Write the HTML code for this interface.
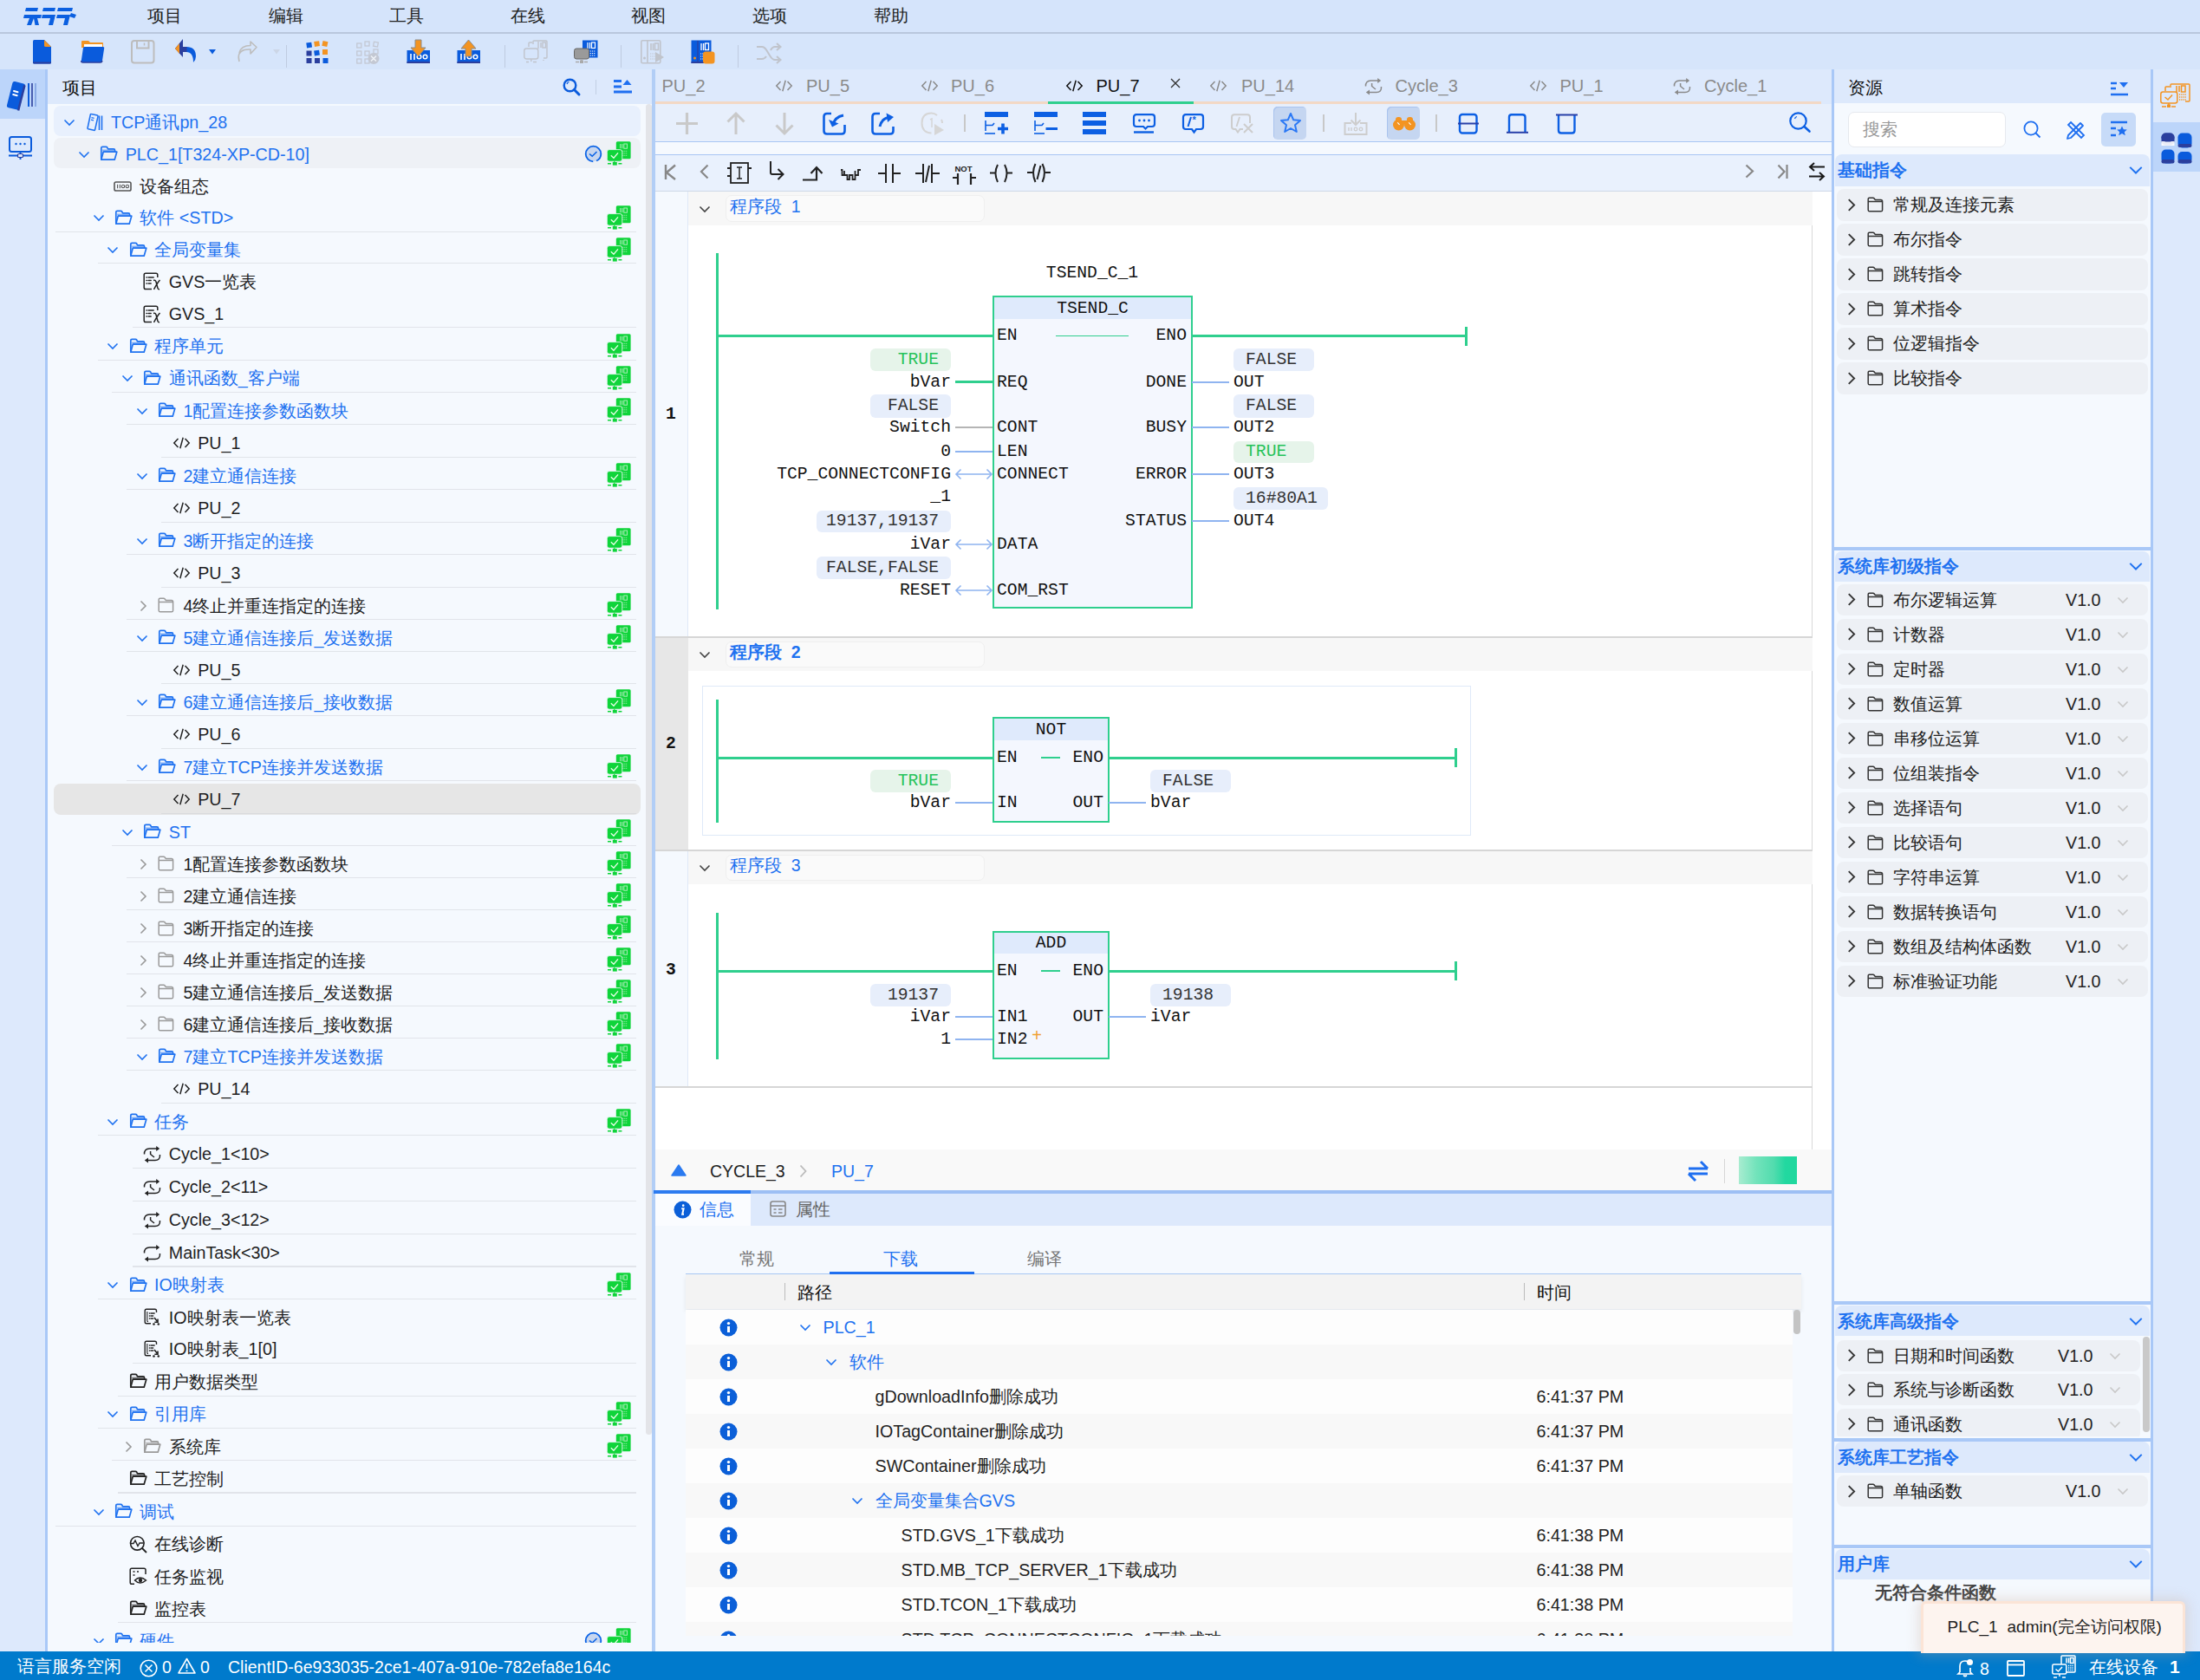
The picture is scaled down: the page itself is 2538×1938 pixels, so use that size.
<!DOCTYPE html><html><head><meta charset="utf-8"><style>
*{box-sizing:border-box;margin:0;padding:0}
html,body{width:2538px;height:1938px;overflow:hidden;background:#f5f9fe;font-family:"Liberation Sans",sans-serif;}
div{position:absolute}
.t{white-space:nowrap;font-size:19.7px;color:#222}
.m{white-space:nowrap;font-family:"Liberation Mono",monospace;font-size:19.7px;color:#111}
svg{overflow:visible}
</style></head><body><div style="left:0px;top:0px;width:2538px;height:39px;background:#d5e4fb;border-bottom:2px solid #b9c7dd"></div>
<div style="left:0px;top:39px;width:2538px;height:41px;background:#d6e5fb"></div>
<div class="t" style="left:169.7px;top:3.0px;line-height:30px;font-size:19.5px;color:#222">项目</div>
<div class="t" style="left:309.6px;top:3.0px;line-height:30px;font-size:19.5px;color:#222">编辑</div>
<div class="t" style="left:449px;top:3.0px;line-height:30px;font-size:19.5px;color:#222">工具</div>
<div class="t" style="left:588.5px;top:3.0px;line-height:30px;font-size:19.5px;color:#222">在线</div>
<div class="t" style="left:728.4px;top:3.0px;line-height:30px;font-size:19.5px;color:#222">视图</div>
<div class="t" style="left:868px;top:3.0px;line-height:30px;font-size:19.5px;color:#222">选项</div>
<div class="t" style="left:1008.3px;top:3.0px;line-height:30px;font-size:19.5px;color:#222">帮助</div>
<div style="left:0px;top:80px;width:52px;height:1825px;background:#dde9fc"></div>
<div style="left:0px;top:80px;width:52px;height:57px;background:#bcd5fa"></div>
<div style="left:52px;top:80px;width:3px;height:1825px;background:#a9c8f7"></div>
<div style="left:55px;top:80px;width:697px;height:40px;background:#dde9fc"></div>
<div class="t" style="left:72px;top:86.0px;line-height:30px;font-size:19.7px;color:#111">项目</div>
<div style="left:55px;top:120px;width:697px;height:1785px;background:#f5f9fe"></div>
<div style="left:745px;top:120px;width:7px;height:1535px;background:#e3e4e8;border-radius:4px"></div>
<div style="left:752px;top:80px;width:4px;height:1825px;background:#b2cef6"></div>
<div style="left:756px;top:80px;width:1357px;height:37px;background:#dde9fc"></div>
<div style="left:756px;top:117px;width:1345px;height:3px;background:#f2d8c5"></div>
<div style="left:1209px;top:117px;width:168px;height:3px;background:#2fcf8e"></div>
<div style="left:2101px;top:117px;width:12px;height:3px;background:#dde9fc"></div>
<div style="left:756px;top:120px;width:1357px;height:44px;background:#e7effc;border-bottom:1px solid #a8c5f3"></div>
<div style="left:756px;top:164px;width:1357px;height:15px;background:#f5f9fe;border-bottom:1px solid #a8c5f3"></div>
<div style="left:756px;top:179px;width:1357px;height:42px;background:#e9f1fd;border-bottom:1px solid #cfd9e8"></div>
<div style="left:756px;top:221px;width:1357px;height:1105px;background:#ffffff"></div>
<div style="left:2113px;top:80px;width:3px;height:1825px;background:#a9c8f7"></div>
<div style="left:2116px;top:80px;width:365px;height:1825px;background:#f5f9fe"></div>
<div style="left:2481px;top:80px;width:3px;height:1825px;background:#a9c8f7"></div>
<div style="left:2484px;top:80px;width:54px;height:1825px;background:#dde9fc"></div>
<div style="left:2484px;top:141px;width:54px;height:57px;background:#bcd5fa"></div>
<div style="left:0px;top:1905px;width:2538px;height:33px;background:#007acc"></div>
<div style="left:55px;top:120px;width:690px;height:1775px;overflow:hidden"><div style="left:7px;top:2px;width:677px;height:35px;background:#e8f0fd;border-radius:8px"></div><svg style="position:absolute;left:18.299999999999997px;top:16.5px;color:#1f72f0;" width="14" height="9"><use href="#chev-d"/></svg><svg style="position:absolute;left:44.5px;top:10.0px;color:#1f72f0;" width="19" height="22"><use href="#proj"/></svg><div class="t" style="left:73.0px;top:5.5px;line-height:30px;color:#1f72f0">TCP通讯pn_28</div><div style="left:7px;top:39px;width:677px;height:34.5px;background:#eef1f6;border-radius:8px"></div><svg style="position:absolute;left:35.0px;top:53.900000000000006px;color:#1f72f0;" width="14" height="9"><use href="#chev-d"/></svg><svg style="position:absolute;left:60.2px;top:48.400000000000006px;color:#1f72f0;" width="21" height="18"><use href="#fold-open"/></svg><div class="t" style="left:89.69999999999999px;top:42.900000000000006px;line-height:30px;color:#1f72f0">PLC_1[T324-XP-CD-10]</div><svg style="position:absolute;left:644.8px;top:43.300000000000004px;color:#222;" width="28" height="28"><use href="#greenplc"/></svg><svg style="position:absolute;left:619px;top:47.400000000000006px;color:#222;" width="21" height="21"><use href="#checkc"/></svg><svg style="position:absolute;left:76.4px;top:89px;color:#555;" width="21" height="12"><use href="#device"/></svg><div class="t" style="left:106.4px;top:80.0px;line-height:30px;color:#1e1e1e">设备组态</div><div style="left:9px;top:147.00000000000003px;width:670px;height:1.2px;background:#e1e4ea"></div><svg style="position:absolute;left:51.69999999999999px;top:127.19999999999999px;color:#1f72f0;" width="14" height="9"><use href="#chev-d"/></svg><svg style="position:absolute;left:76.9px;top:121.69999999999999px;color:#1f72f0;" width="21" height="18"><use href="#fold-open"/></svg><div class="t" style="left:106.4px;top:116.19999999999999px;line-height:30px;color:#1f72f0">软件 &lt;STD&gt;</div><svg style="position:absolute;left:644.8px;top:116.6px;color:#222;" width="28" height="28"><use href="#greenplc"/></svg><div style="left:58px;top:182.70000000000002px;width:621px;height:1.2px;background:#e1e4ea"></div><svg style="position:absolute;left:68.39999999999999px;top:164.25000000000006px;color:#1f72f0;" width="14" height="9"><use href="#chev-d"/></svg><svg style="position:absolute;left:93.6px;top:158.75000000000006px;color:#1f72f0;" width="21" height="18"><use href="#fold-open"/></svg><div class="t" style="left:123.1px;top:153.25000000000006px;line-height:30px;color:#1f72f0">全局变量集</div><svg style="position:absolute;left:644.8px;top:153.65000000000006px;color:#222;" width="28" height="28"><use href="#greenplc"/></svg><svg style="position:absolute;left:110.30000000000001px;top:194.25000000000006px;color:#222;" width="21" height="21"><use href="#table"/></svg><div class="t" style="left:139.8px;top:189.75000000000006px;line-height:30px;color:#1e1e1e">GVS一览表</div><div style="left:98px;top:257.29999999999995px;width:581px;height:1.2px;background:#e1e4ea"></div><svg style="position:absolute;left:110.30000000000001px;top:231.55px;color:#222;" width="21" height="21"><use href="#table"/></svg><div class="t" style="left:139.8px;top:227.05px;line-height:30px;color:#1e1e1e">GVS_1</div><div style="left:58px;top:294.59999999999997px;width:621px;height:1.2px;background:#e1e4ea"></div><svg style="position:absolute;left:68.39999999999999px;top:275.34999999999997px;color:#1f72f0;" width="14" height="9"><use href="#chev-d"/></svg><svg style="position:absolute;left:93.6px;top:269.84999999999997px;color:#1f72f0;" width="21" height="18"><use href="#fold-open"/></svg><div class="t" style="left:123.1px;top:264.34999999999997px;line-height:30px;color:#1f72f0">程序单元</div><svg style="position:absolute;left:644.8px;top:264.74999999999994px;color:#222;" width="28" height="28"><use href="#greenplc"/></svg><div style="left:74px;top:331.5px;width:605px;height:1.2px;background:#e1e4ea"></div><svg style="position:absolute;left:85.1px;top:312.45px;color:#1f72f0;" width="14" height="9"><use href="#chev-d"/></svg><svg style="position:absolute;left:110.30000000000001px;top:306.95px;color:#1f72f0;" width="21" height="18"><use href="#fold-open"/></svg><div class="t" style="left:139.8px;top:301.45px;line-height:30px;color:#1f72f0">通讯函数_客户端</div><svg style="position:absolute;left:644.8px;top:301.84999999999997px;color:#222;" width="28" height="28"><use href="#greenplc"/></svg><div style="left:91px;top:368.9px;width:588px;height:1.2px;background:#e1e4ea"></div><svg style="position:absolute;left:101.80000000000001px;top:349.6px;color:#1f72f0;" width="14" height="9"><use href="#chev-d"/></svg><svg style="position:absolute;left:127.0px;top:344.1px;color:#1f72f0;" width="21" height="18"><use href="#fold-open"/></svg><div class="t" style="left:156.5px;top:338.6px;line-height:30px;color:#1f72f0">1配置连接参数函数块</div><svg style="position:absolute;left:644.8px;top:339.0px;color:#222;" width="28" height="28"><use href="#greenplc"/></svg><div style="left:131px;top:407.0px;width:548px;height:1.2px;background:#e1e4ea"></div><svg style="position:absolute;left:143.7px;top:383.35px;color:#222;" width="21" height="16"><use href="#code"/></svg><div class="t" style="left:173.2px;top:376.35px;line-height:30px;color:#1e1e1e">PU_1</div><div style="left:91px;top:443.9px;width:588px;height:1.2px;background:#e1e4ea"></div><svg style="position:absolute;left:101.80000000000001px;top:424.8499999999999px;color:#1f72f0;" width="14" height="9"><use href="#chev-d"/></svg><svg style="position:absolute;left:127.0px;top:419.3499999999999px;color:#1f72f0;" width="21" height="18"><use href="#fold-open"/></svg><div class="t" style="left:156.5px;top:413.8499999999999px;line-height:30px;color:#1f72f0">2建立通信连接</div><svg style="position:absolute;left:644.8px;top:414.2499999999999px;color:#222;" width="28" height="28"><use href="#greenplc"/></svg><div style="left:131px;top:482.0px;width:548px;height:1.2px;background:#e1e4ea"></div><svg style="position:absolute;left:143.7px;top:458.3499999999999px;color:#222;" width="21" height="16"><use href="#code"/></svg><div class="t" style="left:173.2px;top:451.3499999999999px;line-height:30px;color:#1e1e1e">PU_2</div><div style="left:91px;top:518.9px;width:588px;height:1.2px;background:#e1e4ea"></div><svg style="position:absolute;left:101.80000000000001px;top:499.8499999999999px;color:#1f72f0;" width="14" height="9"><use href="#chev-d"/></svg><svg style="position:absolute;left:127.0px;top:494.3499999999999px;color:#1f72f0;" width="21" height="18"><use href="#fold-open"/></svg><div class="t" style="left:156.5px;top:488.8499999999999px;line-height:30px;color:#1f72f0">3断开指定的连接</div><svg style="position:absolute;left:644.8px;top:489.2499999999999px;color:#222;" width="28" height="28"><use href="#greenplc"/></svg><div style="left:131px;top:557.0px;width:548px;height:1.2px;background:#e1e4ea"></div><svg style="position:absolute;left:143.7px;top:533.3499999999999px;color:#222;" width="21" height="16"><use href="#code"/></svg><div class="t" style="left:173.2px;top:526.3499999999999px;line-height:30px;color:#1e1e1e">PU_3</div><div style="left:91px;top:593.9px;width:588px;height:1.2px;background:#e1e4ea"></div><svg style="position:absolute;left:105.80000000000001px;top:571.8499999999999px;color:#999;" width="9" height="14"><use href="#chev-r"/></svg><svg style="position:absolute;left:127.0px;top:569.3499999999999px;color:#9a9a9a;" width="19" height="18"><use href="#fold"/></svg><div class="t" style="left:156.5px;top:563.8499999999999px;line-height:30px;color:#1e1e1e">4终止并重连指定的连接</div><svg style="position:absolute;left:644.8px;top:564.2499999999999px;color:#222;" width="28" height="28"><use href="#greenplc"/></svg><div style="left:91px;top:630.8px;width:588px;height:1.2px;background:#e1e4ea"></div><svg style="position:absolute;left:101.80000000000001px;top:611.75px;color:#1f72f0;" width="14" height="9"><use href="#chev-d"/></svg><svg style="position:absolute;left:127.0px;top:606.25px;color:#1f72f0;" width="21" height="18"><use href="#fold-open"/></svg><div class="t" style="left:156.5px;top:600.75px;line-height:30px;color:#1f72f0">5建立通信连接后_发送数据</div><svg style="position:absolute;left:644.8px;top:601.15px;color:#222;" width="28" height="28"><use href="#greenplc"/></svg><div style="left:131px;top:668.1999999999999px;width:548px;height:1.2px;background:#e1e4ea"></div><svg style="position:absolute;left:143.7px;top:644.8999999999999px;color:#222;" width="21" height="16"><use href="#code"/></svg><div class="t" style="left:173.2px;top:637.8999999999999px;line-height:30px;color:#1e1e1e">PU_5</div><div style="left:91px;top:704.6px;width:588px;height:1.2px;background:#e1e4ea"></div><svg style="position:absolute;left:101.80000000000001px;top:685.8px;color:#1f72f0;" width="14" height="9"><use href="#chev-d"/></svg><svg style="position:absolute;left:127.0px;top:680.3px;color:#1f72f0;" width="21" height="18"><use href="#fold-open"/></svg><div class="t" style="left:156.5px;top:674.8px;line-height:30px;color:#1f72f0">6建立通信连接后_接收数据</div><svg style="position:absolute;left:644.8px;top:675.1999999999999px;color:#222;" width="28" height="28"><use href="#greenplc"/></svg><div style="left:131px;top:743.1px;width:548px;height:1.2px;background:#e1e4ea"></div><svg style="position:absolute;left:143.7px;top:719.25px;color:#222;" width="21" height="16"><use href="#code"/></svg><div class="t" style="left:173.2px;top:712.25px;line-height:30px;color:#1e1e1e">PU_6</div><div style="left:91px;top:779.9px;width:588px;height:1.2px;background:#e1e4ea"></div><svg style="position:absolute;left:101.80000000000001px;top:760.9px;color:#1f72f0;" width="14" height="9"><use href="#chev-d"/></svg><svg style="position:absolute;left:127.0px;top:755.4px;color:#1f72f0;" width="21" height="18"><use href="#fold-open"/></svg><div class="t" style="left:156.5px;top:749.9px;line-height:30px;color:#1f72f0">7建立TCP连接并发送数据</div><svg style="position:absolute;left:644.8px;top:750.3px;color:#222;" width="28" height="28"><use href="#greenplc"/></svg><div style="left:7px;top:784px;width:677px;height:36px;background:#e6e6e6;border-radius:8px"></div><div style="left:131px;top:817.5px;width:548px;height:1.2px;background:#d9dadd"></div><svg style="position:absolute;left:143.7px;top:794.0999999999999px;color:#222;" width="21" height="16"><use href="#code"/></svg><div class="t" style="left:173.2px;top:787.0999999999999px;line-height:30px;color:#1e1e1e">PU_7</div><div style="left:74px;top:854.9px;width:605px;height:1.2px;background:#e1e4ea"></div><svg style="position:absolute;left:85.1px;top:835.5999999999999px;color:#1f72f0;" width="14" height="9"><use href="#chev-d"/></svg><svg style="position:absolute;left:110.30000000000001px;top:830.0999999999999px;color:#1f72f0;" width="21" height="18"><use href="#fold-open"/></svg><div class="t" style="left:139.8px;top:824.5999999999999px;line-height:30px;color:#1f72f0">ST</div><svg style="position:absolute;left:644.8px;top:824.9999999999999px;color:#222;" width="28" height="28"><use href="#greenplc"/></svg><div style="left:91px;top:891.8px;width:588px;height:1.2px;background:#e1e4ea"></div><svg style="position:absolute;left:105.80000000000001px;top:869.75px;color:#999;" width="9" height="14"><use href="#chev-r"/></svg><svg style="position:absolute;left:127.0px;top:867.25px;color:#9a9a9a;" width="19" height="18"><use href="#fold"/></svg><div class="t" style="left:156.5px;top:861.75px;line-height:30px;color:#1e1e1e">1配置连接参数函数块</div><svg style="position:absolute;left:644.8px;top:862.15px;color:#222;" width="28" height="28"><use href="#greenplc"/></svg><div style="left:91px;top:929.1999999999999px;width:588px;height:1.2px;background:#e1e4ea"></div><svg style="position:absolute;left:105.80000000000001px;top:906.8999999999999px;color:#999;" width="9" height="14"><use href="#chev-r"/></svg><svg style="position:absolute;left:127.0px;top:904.3999999999999px;color:#9a9a9a;" width="19" height="18"><use href="#fold"/></svg><div class="t" style="left:156.5px;top:898.8999999999999px;line-height:30px;color:#1e1e1e">2建立通信连接</div><svg style="position:absolute;left:644.8px;top:899.2999999999998px;color:#222;" width="28" height="28"><use href="#greenplc"/></svg><div style="left:91px;top:966.1px;width:588px;height:1.2px;background:#e1e4ea"></div><svg style="position:absolute;left:105.80000000000001px;top:944.05px;color:#999;" width="9" height="14"><use href="#chev-r"/></svg><svg style="position:absolute;left:127.0px;top:941.55px;color:#9a9a9a;" width="19" height="18"><use href="#fold"/></svg><div class="t" style="left:156.5px;top:936.05px;line-height:30px;color:#1e1e1e">3断开指定的连接</div><svg style="position:absolute;left:644.8px;top:936.4499999999999px;color:#222;" width="28" height="28"><use href="#greenplc"/></svg><div style="left:91px;top:1002.9999999999999px;width:588px;height:1.2px;background:#e1e4ea"></div><svg style="position:absolute;left:105.80000000000001px;top:980.95px;color:#999;" width="9" height="14"><use href="#chev-r"/></svg><svg style="position:absolute;left:127.0px;top:978.45px;color:#9a9a9a;" width="19" height="18"><use href="#fold"/></svg><div class="t" style="left:156.5px;top:972.95px;line-height:30px;color:#1e1e1e">4终止并重连指定的连接</div><svg style="position:absolute;left:644.8px;top:973.35px;color:#222;" width="28" height="28"><use href="#greenplc"/></svg><div style="left:91px;top:1040.1000000000001px;width:588px;height:1.2px;background:#e1e4ea"></div><svg style="position:absolute;left:105.80000000000001px;top:1017.95px;color:#999;" width="9" height="14"><use href="#chev-r"/></svg><svg style="position:absolute;left:127.0px;top:1015.45px;color:#9a9a9a;" width="19" height="18"><use href="#fold"/></svg><div class="t" style="left:156.5px;top:1009.95px;line-height:30px;color:#1e1e1e">5建立通信连接后_发送数据</div><svg style="position:absolute;left:644.8px;top:1010.35px;color:#222;" width="28" height="28"><use href="#greenplc"/></svg><div style="left:91px;top:1077.0px;width:588px;height:1.2px;background:#e1e4ea"></div><svg style="position:absolute;left:105.80000000000001px;top:1054.95px;color:#999;" width="9" height="14"><use href="#chev-r"/></svg><svg style="position:absolute;left:127.0px;top:1052.45px;color:#9a9a9a;" width="19" height="18"><use href="#fold"/></svg><div class="t" style="left:156.5px;top:1046.95px;line-height:30px;color:#1e1e1e">6建立通信连接后_接收数据</div><svg style="position:absolute;left:644.8px;top:1047.3500000000001px;color:#222;" width="28" height="28"><use href="#greenplc"/></svg><div style="left:91px;top:1113.8000000000002px;width:588px;height:1.2px;background:#e1e4ea"></div><svg style="position:absolute;left:101.80000000000001px;top:1094.8px;color:#1f72f0;" width="14" height="9"><use href="#chev-d"/></svg><svg style="position:absolute;left:127.0px;top:1089.3px;color:#1f72f0;" width="21" height="18"><use href="#fold-open"/></svg><div class="t" style="left:156.5px;top:1083.8px;line-height:30px;color:#1f72f0">7建立TCP连接并发送数据</div><svg style="position:absolute;left:644.8px;top:1084.2px;color:#222;" width="28" height="28"><use href="#greenplc"/></svg><div style="left:131px;top:1151.8000000000002px;width:548px;height:1.2px;background:#e1e4ea"></div><svg style="position:absolute;left:143.7px;top:1128.2px;color:#222;" width="21" height="16"><use href="#code"/></svg><div class="t" style="left:173.2px;top:1121.2px;line-height:30px;color:#1e1e1e">PU_14</div><div style="left:58px;top:1188.7px;width:621px;height:1.2px;background:#e1e4ea"></div><svg style="position:absolute;left:68.39999999999999px;top:1169.6499999999999px;color:#1f72f0;" width="14" height="9"><use href="#chev-d"/></svg><svg style="position:absolute;left:93.6px;top:1164.1499999999999px;color:#1f72f0;" width="21" height="18"><use href="#fold-open"/></svg><div class="t" style="left:123.1px;top:1158.6499999999999px;line-height:30px;color:#1f72f0">任务</div><svg style="position:absolute;left:644.8px;top:1159.05px;color:#222;" width="28" height="28"><use href="#greenplc"/></svg><div style="left:98px;top:1226.8000000000002px;width:581px;height:1.2px;background:#e1e4ea"></div><svg style="position:absolute;left:110.30000000000001px;top:1200.6499999999999px;color:#222;" width="21" height="21"><use href="#cycle"/></svg><div class="t" style="left:139.8px;top:1196.1499999999999px;line-height:30px;color:#1e1e1e">Cycle_1&lt;10&gt;</div><div style="left:98px;top:1264.9px;width:581px;height:1.2px;background:#e1e4ea"></div><svg style="position:absolute;left:110.30000000000001px;top:1238.75px;color:#222;" width="21" height="21"><use href="#cycle"/></svg><div class="t" style="left:139.8px;top:1234.25px;line-height:30px;color:#1e1e1e">Cycle_2&lt;11&gt;</div><div style="left:98px;top:1303.0px;width:581px;height:1.2px;background:#e1e4ea"></div><svg style="position:absolute;left:110.30000000000001px;top:1276.85px;color:#222;" width="21" height="21"><use href="#cycle"/></svg><div class="t" style="left:139.8px;top:1272.35px;line-height:30px;color:#1e1e1e">Cycle_3&lt;12&gt;</div><div style="left:98px;top:1340.4px;width:581px;height:1.2px;background:#e1e4ea"></div><svg style="position:absolute;left:110.30000000000001px;top:1314.6px;color:#222;" width="21" height="21"><use href="#maintask"/></svg><div class="t" style="left:139.8px;top:1310.1px;line-height:30px;color:#1e1e1e">MainTask&lt;30&gt;</div><div style="left:58px;top:1377.7px;width:621px;height:1.2px;background:#e1e4ea"></div><svg style="position:absolute;left:68.39999999999999px;top:1358.45px;color:#1f72f0;" width="14" height="9"><use href="#chev-d"/></svg><svg style="position:absolute;left:93.6px;top:1352.95px;color:#1f72f0;" width="21" height="18"><use href="#fold-open"/></svg><div class="t" style="left:123.1px;top:1347.45px;line-height:30px;color:#1f72f0">IO映射表</div><svg style="position:absolute;left:644.8px;top:1347.8500000000001px;color:#222;" width="28" height="28"><use href="#greenplc"/></svg><svg style="position:absolute;left:110.30000000000001px;top:1389.05px;color:#222;" width="21" height="21"><use href="#iotable"/></svg><div class="t" style="left:139.8px;top:1384.55px;line-height:30px;color:#1e1e1e">IO映射表一览表</div><div style="left:98px;top:1451.5px;width:581px;height:1.2px;background:#e1e4ea"></div><svg style="position:absolute;left:110.30000000000001px;top:1425.9499999999998px;color:#222;" width="21" height="21"><use href="#iotable"/></svg><div class="t" style="left:139.8px;top:1421.4499999999998px;line-height:30px;color:#1e1e1e">IO映射表_1[0]</div><div style="left:81px;top:1489.5px;width:598px;height:1.2px;background:#e1e4ea"></div><svg style="position:absolute;left:93.6px;top:1464.3999999999999px;color:#222;" width="21" height="18"><use href="#fold-open"/></svg><div class="t" style="left:123.1px;top:1458.8999999999999px;line-height:30px;color:#1e1e1e">用户数据类型</div><div style="left:58px;top:1526.5px;width:621px;height:1.2px;background:#e1e4ea"></div><svg style="position:absolute;left:68.39999999999999px;top:1507.3999999999999px;color:#1f72f0;" width="14" height="9"><use href="#chev-d"/></svg><svg style="position:absolute;left:93.6px;top:1501.8999999999999px;color:#1f72f0;" width="21" height="18"><use href="#fold-open"/></svg><div class="t" style="left:123.1px;top:1496.3999999999999px;line-height:30px;color:#1f72f0">引用库</div><svg style="position:absolute;left:644.8px;top:1496.8px;color:#222;" width="28" height="28"><use href="#greenplc"/></svg><div style="left:74px;top:1563.7px;width:605px;height:1.2px;background:#e1e4ea"></div><svg style="position:absolute;left:89.1px;top:1541.4999999999998px;color:#999;" width="9" height="14"><use href="#chev-r"/></svg><svg style="position:absolute;left:110.30000000000001px;top:1538.9999999999998px;color:#9a9a9a;" width="21" height="18"><use href="#fold-open"/></svg><div class="t" style="left:139.8px;top:1533.4999999999998px;line-height:30px;color:#1e1e1e">系统库</div><svg style="position:absolute;left:644.8px;top:1533.8999999999999px;color:#222;" width="28" height="28"><use href="#greenplc"/></svg><div style="left:81px;top:1601.4px;width:598px;height:1.2px;background:#e1e4ea"></div><svg style="position:absolute;left:93.6px;top:1576.45px;color:#222;" width="21" height="18"><use href="#fold-open"/></svg><div class="t" style="left:123.1px;top:1570.95px;line-height:30px;color:#1e1e1e">工艺控制</div><div style="left:9px;top:1639.5px;width:670px;height:1.2px;background:#e1e4ea"></div><svg style="position:absolute;left:51.69999999999999px;top:1619.85px;color:#1f72f0;" width="14" height="9"><use href="#chev-d"/></svg><svg style="position:absolute;left:76.9px;top:1614.35px;color:#1f72f0;" width="21" height="18"><use href="#fold-open"/></svg><div class="t" style="left:106.4px;top:1608.85px;line-height:30px;color:#1f72f0">调试</div><svg style="position:absolute;left:93.6px;top:1650.9333333333332px;color:#222;" width="21" height="21"><use href="#diag"/></svg><div class="t" style="left:123.1px;top:1646.4333333333332px;line-height:30px;color:#1e1e1e">在线诊断</div><svg style="position:absolute;left:93.6px;top:1687.9999999999998px;color:#222;" width="21" height="21"><use href="#monitor"/></svg><div class="t" style="left:123.1px;top:1683.4999999999998px;line-height:30px;color:#1e1e1e">任务监视</div><div style="left:81px;top:1750.7px;width:598px;height:1.2px;background:#e1e4ea"></div><svg style="position:absolute;left:93.6px;top:1726.0666666666666px;color:#222;" width="21" height="18"><use href="#fold-open"/></svg><div class="t" style="left:123.1px;top:1720.5666666666666px;line-height:30px;color:#1e1e1e">监控表</div><svg style="position:absolute;left:51.69999999999999px;top:1768.7px;color:#1f72f0;" width="14" height="9"><use href="#chev-d"/></svg><svg style="position:absolute;left:76.9px;top:1763.2px;color:#1f72f0;" width="21" height="18"><use href="#fold-open"/></svg><div class="t" style="left:106.4px;top:1757.7px;line-height:30px;color:#1f72f0">硬件</div><svg style="position:absolute;left:644.8px;top:1758.1000000000001px;color:#222;" width="28" height="28"><use href="#greenplc"/></svg><svg style="position:absolute;left:619px;top:1762.2px;color:#222;" width="21" height="21"><use href="#checkc"/></svg></div>
<div style="left:756px;top:221px;width:38px;height:1033px;background:#f5f9fe;border-right:1.5px solid #dfe9f7"></div>
<div style="left:756px;top:735px;width:38px;height:246px;background:#e7e7e7"></div>
<div style="left:2090px;top:221px;width:1px;height:1105px;background:#d9d9d9"></div>
<div style="left:794px;top:221px;width:1297px;height:39px;background:#f7f7f7"></div><div style="left:837px;top:225px;width:299px;height:31px;background:#fafafa;border:1px solid #efefef;border-radius:7px"></div><svg style="position:absolute;left:806px;top:236.5px;color:#444;" width="14" height="9"><use href="#chev-d"/></svg><div class="t" style="left:842px;top:222.5px;line-height:30px;color:#1f72f0;font-size:19.5px;">程序段&nbsp;&nbsp;1</div>
<div style="left:756px;top:733.5px;width:1335px;height:2px;background:#d6d6d6"></div>
<div style="left:794px;top:735.5px;width:1297px;height:38.5px;background:#f7f7f7"></div><div style="left:837px;top:739.5px;width:299px;height:30.5px;background:#fafafa;border:1px solid #efefef;border-radius:7px"></div><svg style="position:absolute;left:806px;top:750.75px;color:#444;" width="14" height="9"><use href="#chev-d"/></svg><div class="t" style="left:842px;top:736.75px;line-height:30px;color:#1f72f0;font-size:19.5px;font-weight:bold;">程序段&nbsp;&nbsp;2</div>
<div style="left:756px;top:979.5px;width:1335px;height:2px;background:#d6d6d6"></div>
<div style="left:794px;top:981.5px;width:1297px;height:38.5px;background:#f7f7f7"></div><div style="left:837px;top:985.5px;width:299px;height:30.5px;background:#fafafa;border:1px solid #efefef;border-radius:7px"></div><svg style="position:absolute;left:806px;top:996.75px;color:#444;" width="14" height="9"><use href="#chev-d"/></svg><div class="t" style="left:842px;top:982.75px;line-height:30px;color:#1f72f0;font-size:19.5px;">程序段&nbsp;&nbsp;3</div>
<div style="left:756px;top:1253px;width:1335px;height:2px;background:#d6d6d6"></div>
<div class="m" style="left:768px;top:465.0px;line-height:26px;font-weight:bold;color:#111">1</div>
<div class="m" style="left:768px;top:845.0px;line-height:26px;font-weight:bold;color:#111">2</div>
<div class="m" style="left:768px;top:1106.0px;line-height:26px;font-weight:bold;color:#111">3</div>
<div style="left:826.0px;top:292px;width:3px;height:411px;background:#2fcf8e"></div>
<div style="left:827px;top:386.0px;width:319px;height:3px;background:#2fcf8e"></div>
<div class="m" style="left:1110.0px;top:302.0px;width:300px;line-height:26px;text-align:center;color:#111">TSEND_C_1</div>
<div style="left:1145px;top:341px;width:231px;height:361px;background:#f4f7fe;border:2px solid #2fcf8e"></div><div style="left:1147px;top:343px;width:227px;height:25px;background:#dfeafc"></div><div class="m" style="left:1145.0px;top:342.5px;width:231px;line-height:26px;text-align:center;color:#111">TSEND_C</div>
<div style="left:1218px;top:386.75px;width:84px;height:1.5px;background:#2fcf8e"></div>
<div style="left:1375px;top:386.0px;width:316px;height:3px;background:#2fcf8e"></div>
<div style="left:1689.5px;top:376.5px;width:3px;height:22px;background:#2fcf8e"></div>
<div class="m" style="left:1150px;top:374.0px;line-height:26px;color:#111;">EN</div>
<div class="m" style="left:1150px;top:427.5px;line-height:26px;color:#111;">REQ</div>
<div class="m" style="left:1150px;top:480.0px;line-height:26px;color:#111;">CONT</div>
<div class="m" style="left:1150px;top:507.5px;line-height:26px;color:#111;">LEN</div>
<div class="m" style="left:1150px;top:534.0px;line-height:26px;color:#111;">CONNECT</div>
<div class="m" style="left:1150px;top:614.5px;line-height:26px;color:#111;">DATA</div>
<div class="m" style="left:1150px;top:668.0px;line-height:26px;color:#111;">COM_RST</div>
<div class="m" style="right:1169px;top:374.0px;line-height:26px;text-align:right;color:#111;">ENO</div>
<div class="m" style="right:1169px;top:427.5px;line-height:26px;text-align:right;color:#111;">DONE</div>
<div class="m" style="right:1169px;top:480.0px;line-height:26px;text-align:right;color:#111;">BUSY</div>
<div class="m" style="right:1169px;top:534.0px;line-height:26px;text-align:right;color:#111;">ERROR</div>
<div class="m" style="right:1169px;top:588.0px;line-height:26px;text-align:right;color:#111;">STATUS</div>
<div style="left:1004px;top:401.5px;width:93px;height:26.5px;background:#e6f4ea;border-radius:6px"></div><div class="m" style="right:1455px;top:401.75px;line-height:26px;text-align:right;color:#27c35a">TRUE</div>
<div class="m" style="right:1441px;top:427.5px;line-height:26px;text-align:right;color:#111;">bVar</div>
<div style="left:1102px;top:439.0px;width:43px;height:3px;background:#2fcf8e"></div>
<div style="left:1004px;top:455px;width:93px;height:26.5px;background:#e7eefb;border-radius:6px"></div><div class="m" style="right:1455px;top:455.25px;line-height:26px;text-align:right;color:#333">FALSE</div>
<div class="m" style="right:1441px;top:480.0px;line-height:26px;text-align:right;color:#111;">Switch</div>
<div style="left:1102px;top:492.0px;width:43px;height:2px;background:#b5b5b5"></div>
<div class="m" style="right:1441px;top:507.5px;line-height:26px;text-align:right;color:#111;">0</div>
<div style="left:1102px;top:519.5px;width:43px;height:2px;background:#8fb4f0"></div>
<div class="m" style="right:1441px;top:534.0px;line-height:26px;text-align:right;color:#111;">TCP_CONNECTCONFIG</div>
<div class="m" style="right:1441px;top:560.0px;line-height:26px;text-align:right;color:#111;">_1</div>
<svg style="position:absolute;left:1102px;top:540px;" width="43" height="14" viewBox="0 0 43 14"><path d="M1 7 H42 M6.5 1.5 L1 7 L6.5 12.5 M36.5 1.5 L42 7 L36.5 12.5" fill="none" stroke="#8fb4f0" stroke-width="1.6"/></svg>
<div style="left:942px;top:588.5px;width:155px;height:25.5px;background:#e7eefb;border-radius:6px"></div><div class="m" style="right:1455px;top:588.25px;line-height:26px;text-align:right;color:#333">19137,19137</div>
<div class="m" style="right:1441px;top:614.5px;line-height:26px;text-align:right;color:#111;">iVar</div>
<svg style="position:absolute;left:1102px;top:620.5px;" width="43" height="14" viewBox="0 0 43 14"><path d="M1 7 H42 M6.5 1.5 L1 7 L6.5 12.5 M36.5 1.5 L42 7 L36.5 12.5" fill="none" stroke="#8fb4f0" stroke-width="1.6"/></svg>
<div style="left:942px;top:641.5px;width:155px;height:26.0px;background:#e7eefb;border-radius:6px"></div><div class="m" style="right:1455px;top:641.5px;line-height:26px;text-align:right;color:#333">FALSE,FALSE</div>
<div class="m" style="right:1441px;top:668.0px;line-height:26px;text-align:right;color:#111;">RESET</div>
<svg style="position:absolute;left:1102px;top:674px;" width="43" height="14" viewBox="0 0 43 14"><path d="M1 7 H42 M6.5 1.5 L1 7 L6.5 12.5 M36.5 1.5 L42 7 L36.5 12.5" fill="none" stroke="#8fb4f0" stroke-width="1.6"/></svg>
<div style="left:1423px;top:401.5px;width:93px;height:26.5px;background:#e7eefb;border-radius:6px"></div>
<div class="m" style="left:1437px;top:401.75px;line-height:26px;color:#333;">FALSE</div>
<div style="left:1423px;top:455px;width:93px;height:26.5px;background:#e7eefb;border-radius:6px"></div>
<div class="m" style="left:1437px;top:455.25px;line-height:26px;color:#333;">FALSE</div>
<div style="left:1423px;top:508.5px;width:93px;height:25.5px;background:#e6f4ea;border-radius:6px"></div>
<div class="m" style="left:1437px;top:508.25px;line-height:26px;color:#27c35a;">TRUE</div>
<div style="left:1423px;top:562px;width:109px;height:25.5px;background:#e7eefb;border-radius:6px"></div>
<div class="m" style="left:1437px;top:561.75px;line-height:26px;color:#333;">16#80A1</div>
<div class="m" style="left:1423px;top:427.5px;line-height:26px;color:#111;">OUT</div>
<div style="left:1375px;top:439.5px;width:43px;height:2px;background:#8fb4f0"></div>
<div class="m" style="left:1423px;top:480.0px;line-height:26px;color:#111;">OUT2</div>
<div style="left:1375px;top:492.0px;width:43px;height:2px;background:#8fb4f0"></div>
<div class="m" style="left:1423px;top:534.0px;line-height:26px;color:#111;">OUT3</div>
<div style="left:1375px;top:546.0px;width:43px;height:2px;background:#8fb4f0"></div>
<div class="m" style="left:1423px;top:588.0px;line-height:26px;color:#111;">OUT4</div>
<div style="left:1375px;top:600.0px;width:43px;height:2px;background:#8fb4f0"></div>
<div style="left:810px;top:791px;width:887px;height:173px;border:1.5px solid #dfe9f8"></div>
<div style="left:826.0px;top:807px;width:3px;height:142px;background:#2fcf8e"></div>
<div style="left:827px;top:872.5px;width:319px;height:3px;background:#2fcf8e"></div>
<div style="left:1145px;top:827px;width:135px;height:122px;background:#f4f7fe;border:2px solid #2fcf8e"></div><div style="left:1147px;top:829px;width:131px;height:25px;background:#dfeafc"></div><div class="m" style="left:1145.0px;top:828.5px;width:135px;line-height:26px;text-align:center;color:#111">NOT</div>
<div style="left:1201px;top:873.25px;width:22px;height:1.5px;background:#2fcf8e"></div>
<div style="left:1278px;top:872.5px;width:401px;height:3px;background:#2fcf8e"></div>
<div style="left:1677.5px;top:863px;width:3px;height:22px;background:#2fcf8e"></div>
<div class="m" style="left:1150px;top:861.0px;line-height:26px;color:#111;">EN</div>
<div class="m" style="right:1265px;top:861.0px;line-height:26px;text-align:right;color:#111;">ENO</div>
<div class="m" style="left:1150px;top:913.0px;line-height:26px;color:#111;">IN</div>
<div class="m" style="right:1265px;top:913.0px;line-height:26px;text-align:right;color:#111;">OUT</div>
<div style="left:1004px;top:888px;width:93px;height:26px;background:#e6f4ea;border-radius:6px"></div><div class="m" style="right:1455px;top:888.0px;line-height:26px;text-align:right;color:#27c35a">TRUE</div>
<div class="m" style="right:1441px;top:913.0px;line-height:26px;text-align:right;color:#111;">bVar</div>
<div style="left:1102px;top:925.0px;width:43px;height:2px;background:#8fb4f0"></div>
<div style="left:1327px;top:888px;width:93px;height:26px;background:#e7eefb;border-radius:6px"></div>
<div class="m" style="left:1341px;top:888.0px;line-height:26px;color:#333;">FALSE</div>
<div class="m" style="left:1327px;top:913.0px;line-height:26px;color:#111;">bVar</div>
<div style="left:1279px;top:925.0px;width:43px;height:2px;background:#8fb4f0"></div>
<div style="left:826.0px;top:1053px;width:3px;height:169px;background:#2fcf8e"></div>
<div style="left:827px;top:1118.5px;width:319px;height:3px;background:#2fcf8e"></div>
<div style="left:1145px;top:1074px;width:135px;height:148px;background:#f4f7fe;border:2px solid #2fcf8e"></div><div style="left:1147px;top:1076px;width:131px;height:24px;background:#dfeafc"></div><div class="m" style="left:1145.0px;top:1075.0px;width:135px;line-height:26px;text-align:center;color:#111">ADD</div>
<div style="left:1201px;top:1119.25px;width:22px;height:1.5px;background:#2fcf8e"></div>
<div style="left:1278px;top:1118.5px;width:401px;height:3px;background:#2fcf8e"></div>
<div style="left:1677.5px;top:1109px;width:3px;height:22px;background:#2fcf8e"></div>
<div class="m" style="left:1150px;top:1107.0px;line-height:26px;color:#111;">EN</div>
<div class="m" style="right:1265px;top:1107.0px;line-height:26px;text-align:right;color:#111;">ENO</div>
<div class="m" style="left:1150px;top:1160.0px;line-height:26px;color:#111;">IN1</div>
<div class="m" style="right:1265px;top:1160.0px;line-height:26px;text-align:right;color:#111;">OUT</div>
<div class="m" style="left:1150px;top:1186.0px;line-height:26px;color:#111;">IN2</div>
<div class="t" style="left:1186.0px;top:1184.0px;width:20px;line-height:20px;text-align:center;color:#f0a030;font-size:20px">+</div>
<div style="left:1004px;top:1134.5px;width:93px;height:26px;background:#e7eefb;border-radius:6px"></div>
<div class="m" style="right:1455px;top:1134.5px;line-height:26px;text-align:right;color:#333;">19137</div>
<div class="m" style="right:1441px;top:1160.0px;line-height:26px;text-align:right;color:#111;">iVar</div>
<div style="left:1102px;top:1172.0px;width:43px;height:2px;background:#8fb4f0"></div>
<div class="m" style="right:1441px;top:1186.0px;line-height:26px;text-align:right;color:#111;">1</div>
<div style="left:1102px;top:1198.0px;width:43px;height:2px;background:#8fb4f0"></div>
<div style="left:1327px;top:1134.5px;width:93px;height:26px;background:#e7eefb;border-radius:6px"></div>
<div class="m" style="left:1341px;top:1134.5px;line-height:26px;color:#333;">19138</div>
<div class="m" style="left:1327px;top:1160.0px;line-height:26px;color:#111;">iVar</div>
<div style="left:1279px;top:1172.0px;width:43px;height:2px;background:#8fb4f0"></div>
<div style="left:756px;top:1326px;width:1357px;height:47px;background:#f9f9f9"></div>
<svg style="position:absolute;left:774px;top:1343px;" width="18" height="14" viewBox="0 0 18 14"><path d="M9 1 L17 13 H1 Z" fill="#2a7af0" stroke="#2a7af0" stroke-width="1.5" stroke-linejoin="round"/></svg>
<div class="t" style="left:819px;top:1336.0px;line-height:30px;color:#222;font-size:19.5px">CYCLE_3</div>
<svg style="position:absolute;left:922px;top:1343px;" width="9" height="16" viewBox="0 0 9 16"><path d="M1.5 1.5 L7.5 8 L1.5 14.5" fill="none" stroke="#bbb" stroke-width="1.8"/></svg>
<div class="t" style="left:959px;top:1336.0px;line-height:30px;color:#1f72f0;font-size:19.5px">PU_7</div>
<svg style="position:absolute;left:1946px;top:1338px;" width="26" height="26" viewBox="0 0 26 26"><path d="M2 10 H24 M16 2 L24 10 M24 16 H2 M10 24 L2 16" fill="none" stroke="#1f6ff0" stroke-width="3"/></svg>
<div style="left:1989px;top:1337px;width:1px;height:28px;background:#d6d6d6"></div>
<div style="left:2005.5px;top:1334px;width:67px;height:32px;background:linear-gradient(90deg,#a8ecd0 0%,#72e3bb 30%,#52dcae 60%,#22d8a0 80%,#20d89e 100%)"></div>
<div style="left:754px;top:1373px;width:1359px;height:3.5px;background:#9dbff4"></div>
<div style="left:754px;top:1373px;width:112px;height:3.5px;background:#2d7bf0"></div>
<div style="left:756px;top:1376.5px;width:1357px;height:37.5px;background:#dde9fc"></div>
<div style="left:756px;top:1376.5px;width:110px;height:37.5px;background:#fafcff"></div>
<svg style="position:absolute;left:777px;top:1385px;" width="21" height="21" viewBox="0 0 21 21"><circle cx="10.5" cy="10.5" r="10" fill="#0b5fd8"/><path d="M11.2 5.6 v.1" stroke="#fff" stroke-width="2.6" stroke-linecap="round"/><path d="M9.2 9.2 H11.6 L10.2 15.8 H12" fill="none" stroke="#fff" stroke-width="2"/></svg>
<div class="t" style="left:807px;top:1380.0px;line-height:30px;color:#1f72f0">信息</div>
<svg style="position:absolute;left:888px;top:1385px;" width="19" height="19" viewBox="0 0 19 19"><rect x="1" y="1" width="17" height="17" rx="2.5" fill="none" stroke="#888" stroke-width="1.6"/><path d="M1 6 H18 M4.5 10 h3 M4.5 14 h3 M10 10 h4.5 M10 14 h4.5" stroke="#888" stroke-width="1.5"/></svg>
<div class="t" style="left:918px;top:1380.0px;line-height:30px;color:#666">属性</div>
<div style="left:756px;top:1414px;width:1357px;height:491px;background:#f5f9fe"></div>
<div class="t" style="left:852.5px;top:1437.0px;line-height:30px;color:#777">常规</div>
<div class="t" style="left:1018.5px;top:1437.0px;line-height:30px;color:#1f72f0">下载</div>
<div class="t" style="left:1184.5px;top:1437.0px;line-height:30px;color:#777">编译</div>
<div style="left:791px;top:1469px;width:1287px;height:1px;background:#a8c8f5"></div>
<div style="left:957px;top:1466.5px;width:167px;height:3.5px;background:#1f6ff0"></div>
<div style="left:791px;top:1470px;width:1287px;height:40px;background:#f3f3f3;box-shadow:0 3px 5px rgba(0,0,0,.08)"></div>
<div style="left:905px;top:1480px;width:1px;height:20px;background:#bbb"></div>
<div class="t" style="left:920px;top:1476.0px;line-height:30px;color:#111">路径</div>
<div style="left:1757.5px;top:1480px;width:1px;height:20px;background:#bbb"></div>
<div class="t" style="left:1772.5px;top:1476.0px;line-height:30px;color:#111">时间</div>
<div style="left:791px;top:1510px;width:1287px;height:377px;overflow:hidden"><div style="left:0px;top:1px;width:1277px;height:40px;background:#fdfdfd"></div><svg style="position:absolute;left:38.5px;top:10.5px;" width="21" height="21" viewBox="0 0 21 21"><circle cx="10.5" cy="10.5" r="10" fill="#0b5fd8"/><circle cx="10.5" cy="5.6" r="1.7" fill="#fff"/><path d="M10.5 9 V16" stroke="#fff" stroke-width="3"/></svg><svg style="position:absolute;left:130.5px;top:17px;color:#1f72f0;" width="14" height="9"><use href="#chev-d"/></svg><div class="t" style="left:158.5px;top:6.0px;line-height:30px;color:#1f72f0">PLC_1</div><div style="left:0px;top:41px;width:1277px;height:40px;background:#f8f8f8"></div><svg style="position:absolute;left:38.5px;top:50.5px;" width="21" height="21" viewBox="0 0 21 21"><circle cx="10.5" cy="10.5" r="10" fill="#0b5fd8"/><circle cx="10.5" cy="5.6" r="1.7" fill="#fff"/><path d="M10.5 9 V16" stroke="#fff" stroke-width="3"/></svg><svg style="position:absolute;left:160.5px;top:57px;color:#1f72f0;" width="14" height="9"><use href="#chev-d"/></svg><div class="t" style="left:188.5px;top:46.0px;line-height:30px;color:#1f72f0">软件</div><div style="left:0px;top:81px;width:1277px;height:40px;background:#fdfdfd"></div><svg style="position:absolute;left:38.5px;top:90.5px;" width="21" height="21" viewBox="0 0 21 21"><circle cx="10.5" cy="10.5" r="10" fill="#0b5fd8"/><circle cx="10.5" cy="5.6" r="1.7" fill="#fff"/><path d="M10.5 9 V16" stroke="#fff" stroke-width="3"/></svg><div class="t" style="left:218.5px;top:86.0px;line-height:30px;color:#222">gDownloadInfo删除成功</div><div class="t" style="left:981.5px;top:86.0px;line-height:30px;color:#222">6:41:37 PM</div><div style="left:0px;top:121px;width:1277px;height:40px;background:#f8f8f8"></div><svg style="position:absolute;left:38.5px;top:130.5px;" width="21" height="21" viewBox="0 0 21 21"><circle cx="10.5" cy="10.5" r="10" fill="#0b5fd8"/><circle cx="10.5" cy="5.6" r="1.7" fill="#fff"/><path d="M10.5 9 V16" stroke="#fff" stroke-width="3"/></svg><div class="t" style="left:218.5px;top:126.0px;line-height:30px;color:#222">IOTagContainer删除成功</div><div class="t" style="left:981.5px;top:126.0px;line-height:30px;color:#222">6:41:37 PM</div><div style="left:0px;top:161px;width:1277px;height:40px;background:#fdfdfd"></div><svg style="position:absolute;left:38.5px;top:170.5px;" width="21" height="21" viewBox="0 0 21 21"><circle cx="10.5" cy="10.5" r="10" fill="#0b5fd8"/><circle cx="10.5" cy="5.6" r="1.7" fill="#fff"/><path d="M10.5 9 V16" stroke="#fff" stroke-width="3"/></svg><div class="t" style="left:218.5px;top:166.0px;line-height:30px;color:#222">SWContainer删除成功</div><div class="t" style="left:981.5px;top:166.0px;line-height:30px;color:#222">6:41:37 PM</div><div style="left:0px;top:201px;width:1277px;height:40px;background:#f8f8f8"></div><svg style="position:absolute;left:38.5px;top:210.5px;" width="21" height="21" viewBox="0 0 21 21"><circle cx="10.5" cy="10.5" r="10" fill="#0b5fd8"/><circle cx="10.5" cy="5.6" r="1.7" fill="#fff"/><path d="M10.5 9 V16" stroke="#fff" stroke-width="3"/></svg><svg style="position:absolute;left:190.5px;top:217px;color:#1f72f0;" width="14" height="9"><use href="#chev-d"/></svg><div class="t" style="left:218.5px;top:206.0px;line-height:30px;color:#1f72f0">全局变量集合GVS</div><div style="left:0px;top:241px;width:1277px;height:40px;background:#fdfdfd"></div><svg style="position:absolute;left:38.5px;top:250.5px;" width="21" height="21" viewBox="0 0 21 21"><circle cx="10.5" cy="10.5" r="10" fill="#0b5fd8"/><circle cx="10.5" cy="5.6" r="1.7" fill="#fff"/><path d="M10.5 9 V16" stroke="#fff" stroke-width="3"/></svg><div class="t" style="left:248.5px;top:246.0px;line-height:30px;color:#222">STD.GVS_1下载成功</div><div class="t" style="left:981.5px;top:246.0px;line-height:30px;color:#222">6:41:38 PM</div><div style="left:0px;top:281px;width:1277px;height:40px;background:#f8f8f8"></div><svg style="position:absolute;left:38.5px;top:290.5px;" width="21" height="21" viewBox="0 0 21 21"><circle cx="10.5" cy="10.5" r="10" fill="#0b5fd8"/><circle cx="10.5" cy="5.6" r="1.7" fill="#fff"/><path d="M10.5 9 V16" stroke="#fff" stroke-width="3"/></svg><div class="t" style="left:248.5px;top:286.0px;line-height:30px;color:#222">STD.MB_TCP_SERVER_1下载成功</div><div class="t" style="left:981.5px;top:286.0px;line-height:30px;color:#222">6:41:38 PM</div><div style="left:0px;top:321px;width:1277px;height:40px;background:#fdfdfd"></div><svg style="position:absolute;left:38.5px;top:330.5px;" width="21" height="21" viewBox="0 0 21 21"><circle cx="10.5" cy="10.5" r="10" fill="#0b5fd8"/><circle cx="10.5" cy="5.6" r="1.7" fill="#fff"/><path d="M10.5 9 V16" stroke="#fff" stroke-width="3"/></svg><div class="t" style="left:248.5px;top:326.0px;line-height:30px;color:#222">STD.TCON_1下载成功</div><div class="t" style="left:981.5px;top:326.0px;line-height:30px;color:#222">6:41:38 PM</div><div style="left:0px;top:361px;width:1277px;height:40px;background:#f8f8f8"></div><svg style="position:absolute;left:38.5px;top:370.5px;" width="21" height="21" viewBox="0 0 21 21"><circle cx="10.5" cy="10.5" r="10" fill="#0b5fd8"/><circle cx="10.5" cy="5.6" r="1.7" fill="#fff"/><path d="M10.5 9 V16" stroke="#fff" stroke-width="3"/></svg><div class="t" style="left:248.5px;top:366.0px;line-height:30px;color:#222">STD.TCP_CONNECTCONFIG_1下载成功</div><div class="t" style="left:981.5px;top:366.0px;line-height:30px;color:#222">6:41:38 PM</div></div>
<div style="left:2069px;top:1511px;width:8px;height:28px;background:#c4c4c4;border-radius:4px"></div>
<div style="left:2116px;top:80px;width:365px;height:39px;background:#dde9fc"></div>
<div class="t" style="left:2132px;top:86.0px;line-height:30px;color:#111">资源</div>
<svg style="position:absolute;left:2434px;top:94px;" width="22" height="17" viewBox="0 0 22 17"><path d="M1 2 H8 M1 8 H7 M1 15 H21" stroke="#1f6ff0" stroke-width="2.6"/><path d="M11 1 H21 L16 7 Z" fill="#1f6ff0"/></svg>
<div style="left:2131.5px;top:129px;width:182px;height:40.5px;background:#fff;border:1px solid #e6e9ee;border-radius:7px"></div>
<div class="t" style="left:2149px;top:134.0px;line-height:30px;color:#999">搜索</div>
<svg style="position:absolute;left:2334px;top:139px;" width="21" height="21" viewBox="0 0 21 21"><circle cx="9" cy="9" r="7.6" fill="none" stroke="#1f6ff0" stroke-width="1.8"/><path d="M14.5 14.5 L19.5 19.5" stroke="#1f6ff0" stroke-width="1.8"/></svg>
<svg style="position:absolute;left:2383px;top:138px;" width="24" height="24" viewBox="0 0 24 24"><path d="M3 18 L17 4 L20 7 L6 21 L2 22 Z" fill="none" stroke="#1f6ff0" stroke-width="1.8" stroke-linejoin="round"/><path d="M6 3 L21 18 L18 21 L3 6 Z" fill="none" stroke="#1f6ff0" stroke-width="1.8"/></svg>
<div style="left:2424px;top:130px;width:40px;height:38.5px;background:#c7dbf8;border-radius:5px"></div>
<svg style="position:absolute;left:2434px;top:139px;" width="21" height="20" viewBox="0 0 21 20"><path d="M1 2 H20 M1 9 H7 M1 17 H7" stroke="#1f6ff0" stroke-width="2.4"/><path d="M14 6.5 L15.8 10.3 L19.8 10.6 L16.8 13.2 L17.8 17.2 L14 15 L10.2 17.2 L11.2 13.2 L8.2 10.6 L12.2 10.3 Z" fill="#1f6ff0"/></svg>
<div style="left:2117px;top:178px;width:363px;height:36.5px;background:#dde9fc;border-radius:8px 8px 0 0"></div><div class="t" style="left:2120px;top:181.25px;line-height:30px;color:#1f72f0;font-weight:bold;font-size:19.7px">基础指令</div><svg style="position:absolute;left:2455px;top:191.25px;color:#1f72f0;" width="18" height="11"><use href="#chev-d"/></svg>
<div style="left:2118.5px;top:218px;width:359.5px;height:36.5px;background:#edf0f5;border-radius:8px"></div><svg style="position:absolute;left:2131px;top:227.75px;color:#333;" width="10.5" height="17"><use href="#chev-r"/></svg><svg style="position:absolute;left:2154px;top:227.25px;color:#333;" width="19" height="18"><use href="#fold"/></svg><div class="t" style="left:2184px;top:221.25px;line-height:30px;color:#222">常规及连接元素</div>
<div style="left:2118.5px;top:258px;width:359.5px;height:36.5px;background:#edf0f5;border-radius:8px"></div><svg style="position:absolute;left:2131px;top:267.75px;color:#333;" width="10.5" height="17"><use href="#chev-r"/></svg><svg style="position:absolute;left:2154px;top:267.25px;color:#333;" width="19" height="18"><use href="#fold"/></svg><div class="t" style="left:2184px;top:261.25px;line-height:30px;color:#222">布尔指令</div>
<div style="left:2118.5px;top:298px;width:359.5px;height:36.5px;background:#edf0f5;border-radius:8px"></div><svg style="position:absolute;left:2131px;top:307.75px;color:#333;" width="10.5" height="17"><use href="#chev-r"/></svg><svg style="position:absolute;left:2154px;top:307.25px;color:#333;" width="19" height="18"><use href="#fold"/></svg><div class="t" style="left:2184px;top:301.25px;line-height:30px;color:#222">跳转指令</div>
<div style="left:2118.5px;top:338px;width:359.5px;height:36.5px;background:#edf0f5;border-radius:8px"></div><svg style="position:absolute;left:2131px;top:347.75px;color:#333;" width="10.5" height="17"><use href="#chev-r"/></svg><svg style="position:absolute;left:2154px;top:347.25px;color:#333;" width="19" height="18"><use href="#fold"/></svg><div class="t" style="left:2184px;top:341.25px;line-height:30px;color:#222">算术指令</div>
<div style="left:2118.5px;top:378px;width:359.5px;height:36.5px;background:#edf0f5;border-radius:8px"></div><svg style="position:absolute;left:2131px;top:387.75px;color:#333;" width="10.5" height="17"><use href="#chev-r"/></svg><svg style="position:absolute;left:2154px;top:387.25px;color:#333;" width="19" height="18"><use href="#fold"/></svg><div class="t" style="left:2184px;top:381.25px;line-height:30px;color:#222">位逻辑指令</div>
<div style="left:2118.5px;top:418px;width:359.5px;height:36.5px;background:#edf0f5;border-radius:8px"></div><svg style="position:absolute;left:2131px;top:427.75px;color:#333;" width="10.5" height="17"><use href="#chev-r"/></svg><svg style="position:absolute;left:2154px;top:427.25px;color:#333;" width="19" height="18"><use href="#fold"/></svg><div class="t" style="left:2184px;top:421.25px;line-height:30px;color:#222">比较指令</div>
<div style="left:2116px;top:630.5px;width:365px;height:4px;background:#a9c8f7"></div>
<div style="left:2117px;top:635.5px;width:363px;height:35.5px;background:#dde9fc;border-radius:8px 8px 0 0"></div><div class="t" style="left:2120px;top:638.25px;line-height:30px;color:#1f72f0;font-weight:bold;font-size:19.7px">系统库初级指令</div><svg style="position:absolute;left:2455px;top:648.25px;color:#1f72f0;" width="18" height="11"><use href="#chev-d"/></svg>
<div style="left:2118.5px;top:673.5px;width:359.5px;height:36.5px;background:#edf0f5;border-radius:8px"></div><svg style="position:absolute;left:2131px;top:683.25px;color:#333;" width="10.5" height="17"><use href="#chev-r"/></svg><svg style="position:absolute;left:2154px;top:682.75px;color:#333;" width="19" height="18"><use href="#fold"/></svg><div class="t" style="left:2184px;top:676.75px;line-height:30px;color:#222">布尔逻辑运算</div><div class="t" style="left:2383px;top:676.75px;line-height:30px;color:#222">V1.0</div><svg style="position:absolute;left:2442px;top:687.75px;color:#c8c8c8;" width="14" height="9"><use href="#chev-d"/></svg>
<div style="left:2118.5px;top:713.5px;width:359.5px;height:36.5px;background:#edf0f5;border-radius:8px"></div><svg style="position:absolute;left:2131px;top:723.25px;color:#333;" width="10.5" height="17"><use href="#chev-r"/></svg><svg style="position:absolute;left:2154px;top:722.75px;color:#333;" width="19" height="18"><use href="#fold"/></svg><div class="t" style="left:2184px;top:716.75px;line-height:30px;color:#222">计数器</div><div class="t" style="left:2383px;top:716.75px;line-height:30px;color:#222">V1.0</div><svg style="position:absolute;left:2442px;top:727.75px;color:#c8c8c8;" width="14" height="9"><use href="#chev-d"/></svg>
<div style="left:2118.5px;top:753.5px;width:359.5px;height:36.5px;background:#edf0f5;border-radius:8px"></div><svg style="position:absolute;left:2131px;top:763.25px;color:#333;" width="10.5" height="17"><use href="#chev-r"/></svg><svg style="position:absolute;left:2154px;top:762.75px;color:#333;" width="19" height="18"><use href="#fold"/></svg><div class="t" style="left:2184px;top:756.75px;line-height:30px;color:#222">定时器</div><div class="t" style="left:2383px;top:756.75px;line-height:30px;color:#222">V1.0</div><svg style="position:absolute;left:2442px;top:767.75px;color:#c8c8c8;" width="14" height="9"><use href="#chev-d"/></svg>
<div style="left:2118.5px;top:793.5px;width:359.5px;height:36.5px;background:#edf0f5;border-radius:8px"></div><svg style="position:absolute;left:2131px;top:803.25px;color:#333;" width="10.5" height="17"><use href="#chev-r"/></svg><svg style="position:absolute;left:2154px;top:802.75px;color:#333;" width="19" height="18"><use href="#fold"/></svg><div class="t" style="left:2184px;top:796.75px;line-height:30px;color:#222">数值运算</div><div class="t" style="left:2383px;top:796.75px;line-height:30px;color:#222">V1.0</div><svg style="position:absolute;left:2442px;top:807.75px;color:#c8c8c8;" width="14" height="9"><use href="#chev-d"/></svg>
<div style="left:2118.5px;top:833.5px;width:359.5px;height:36.5px;background:#edf0f5;border-radius:8px"></div><svg style="position:absolute;left:2131px;top:843.25px;color:#333;" width="10.5" height="17"><use href="#chev-r"/></svg><svg style="position:absolute;left:2154px;top:842.75px;color:#333;" width="19" height="18"><use href="#fold"/></svg><div class="t" style="left:2184px;top:836.75px;line-height:30px;color:#222">串移位运算</div><div class="t" style="left:2383px;top:836.75px;line-height:30px;color:#222">V1.0</div><svg style="position:absolute;left:2442px;top:847.75px;color:#c8c8c8;" width="14" height="9"><use href="#chev-d"/></svg>
<div style="left:2118.5px;top:873.5px;width:359.5px;height:36.5px;background:#edf0f5;border-radius:8px"></div><svg style="position:absolute;left:2131px;top:883.25px;color:#333;" width="10.5" height="17"><use href="#chev-r"/></svg><svg style="position:absolute;left:2154px;top:882.75px;color:#333;" width="19" height="18"><use href="#fold"/></svg><div class="t" style="left:2184px;top:876.75px;line-height:30px;color:#222">位组装指令</div><div class="t" style="left:2383px;top:876.75px;line-height:30px;color:#222">V1.0</div><svg style="position:absolute;left:2442px;top:887.75px;color:#c8c8c8;" width="14" height="9"><use href="#chev-d"/></svg>
<div style="left:2118.5px;top:913.5px;width:359.5px;height:36.5px;background:#edf0f5;border-radius:8px"></div><svg style="position:absolute;left:2131px;top:923.25px;color:#333;" width="10.5" height="17"><use href="#chev-r"/></svg><svg style="position:absolute;left:2154px;top:922.75px;color:#333;" width="19" height="18"><use href="#fold"/></svg><div class="t" style="left:2184px;top:916.75px;line-height:30px;color:#222">选择语句</div><div class="t" style="left:2383px;top:916.75px;line-height:30px;color:#222">V1.0</div><svg style="position:absolute;left:2442px;top:927.75px;color:#c8c8c8;" width="14" height="9"><use href="#chev-d"/></svg>
<div style="left:2118.5px;top:953.5px;width:359.5px;height:36.5px;background:#edf0f5;border-radius:8px"></div><svg style="position:absolute;left:2131px;top:963.25px;color:#333;" width="10.5" height="17"><use href="#chev-r"/></svg><svg style="position:absolute;left:2154px;top:962.75px;color:#333;" width="19" height="18"><use href="#fold"/></svg><div class="t" style="left:2184px;top:956.75px;line-height:30px;color:#222">比较语句</div><div class="t" style="left:2383px;top:956.75px;line-height:30px;color:#222">V1.0</div><svg style="position:absolute;left:2442px;top:967.75px;color:#c8c8c8;" width="14" height="9"><use href="#chev-d"/></svg>
<div style="left:2118.5px;top:993.5px;width:359.5px;height:36.5px;background:#edf0f5;border-radius:8px"></div><svg style="position:absolute;left:2131px;top:1003.25px;color:#333;" width="10.5" height="17"><use href="#chev-r"/></svg><svg style="position:absolute;left:2154px;top:1002.75px;color:#333;" width="19" height="18"><use href="#fold"/></svg><div class="t" style="left:2184px;top:996.75px;line-height:30px;color:#222">字符串运算</div><div class="t" style="left:2383px;top:996.75px;line-height:30px;color:#222">V1.0</div><svg style="position:absolute;left:2442px;top:1007.75px;color:#c8c8c8;" width="14" height="9"><use href="#chev-d"/></svg>
<div style="left:2118.5px;top:1033.5px;width:359.5px;height:36.5px;background:#edf0f5;border-radius:8px"></div><svg style="position:absolute;left:2131px;top:1043.25px;color:#333;" width="10.5" height="17"><use href="#chev-r"/></svg><svg style="position:absolute;left:2154px;top:1042.75px;color:#333;" width="19" height="18"><use href="#fold"/></svg><div class="t" style="left:2184px;top:1036.75px;line-height:30px;color:#222">数据转换语句</div><div class="t" style="left:2383px;top:1036.75px;line-height:30px;color:#222">V1.0</div><svg style="position:absolute;left:2442px;top:1047.75px;color:#c8c8c8;" width="14" height="9"><use href="#chev-d"/></svg>
<div style="left:2118.5px;top:1073.5px;width:359.5px;height:36.5px;background:#edf0f5;border-radius:8px"></div><svg style="position:absolute;left:2131px;top:1083.25px;color:#333;" width="10.5" height="17"><use href="#chev-r"/></svg><svg style="position:absolute;left:2154px;top:1082.75px;color:#333;" width="19" height="18"><use href="#fold"/></svg><div class="t" style="left:2184px;top:1076.75px;line-height:30px;color:#222">数组及结构体函数</div><div class="t" style="left:2383px;top:1076.75px;line-height:30px;color:#222">V1.0</div><svg style="position:absolute;left:2442px;top:1087.75px;color:#c8c8c8;" width="14" height="9"><use href="#chev-d"/></svg>
<div style="left:2118.5px;top:1113.5px;width:359.5px;height:36.5px;background:#edf0f5;border-radius:8px"></div><svg style="position:absolute;left:2131px;top:1123.25px;color:#333;" width="10.5" height="17"><use href="#chev-r"/></svg><svg style="position:absolute;left:2154px;top:1122.75px;color:#333;" width="19" height="18"><use href="#fold"/></svg><div class="t" style="left:2184px;top:1116.75px;line-height:30px;color:#222">标准验证功能</div><div class="t" style="left:2383px;top:1116.75px;line-height:30px;color:#222">V1.0</div><svg style="position:absolute;left:2442px;top:1127.75px;color:#c8c8c8;" width="14" height="9"><use href="#chev-d"/></svg>
<div style="left:2116px;top:1501px;width:365px;height:4px;background:#a9c8f7"></div>
<div style="left:2117px;top:1506px;width:363px;height:35px;background:#dde9fc;border-radius:8px 8px 0 0"></div><div class="t" style="left:2120px;top:1508.5px;line-height:30px;color:#1f72f0;font-weight:bold;font-size:19.7px">系统库高级指令</div><svg style="position:absolute;left:2455px;top:1518.5px;color:#1f72f0;" width="18" height="11"><use href="#chev-d"/></svg>
<div style="left:0;top:0;width:2538px;height:1656.5px;overflow:hidden"><div style="left:2118.5px;top:1545.5px;width:350.0px;height:36.0px;background:#edf0f5;border-radius:8px"></div><svg style="position:absolute;left:2131px;top:1555.0px;color:#333;" width="10.5" height="17"><use href="#chev-r"/></svg><svg style="position:absolute;left:2154px;top:1554.5px;color:#333;" width="19" height="18"><use href="#fold"/></svg><div class="t" style="left:2184px;top:1548.5px;line-height:30px;color:#222">日期和时间函数</div><div class="t" style="left:2374px;top:1548.5px;line-height:30px;color:#222">V1.0</div><svg style="position:absolute;left:2433px;top:1559.5px;color:#c8c8c8;" width="14" height="9"><use href="#chev-d"/></svg><div style="left:2118.5px;top:1585.2px;width:350.0px;height:36.0px;background:#edf0f5;border-radius:8px"></div><svg style="position:absolute;left:2131px;top:1594.7px;color:#333;" width="10.5" height="17"><use href="#chev-r"/></svg><svg style="position:absolute;left:2154px;top:1594.2px;color:#333;" width="19" height="18"><use href="#fold"/></svg><div class="t" style="left:2184px;top:1588.2px;line-height:30px;color:#222">系统与诊断函数</div><div class="t" style="left:2374px;top:1588.2px;line-height:30px;color:#222">V1.0</div><svg style="position:absolute;left:2433px;top:1599.2px;color:#c8c8c8;" width="14" height="9"><use href="#chev-d"/></svg><div style="left:2118.5px;top:1624.9px;width:350.0px;height:36.0px;background:#edf0f5;border-radius:8px"></div><svg style="position:absolute;left:2131px;top:1634.4px;color:#333;" width="10.5" height="17"><use href="#chev-r"/></svg><svg style="position:absolute;left:2154px;top:1633.9px;color:#333;" width="19" height="18"><use href="#fold"/></svg><div class="t" style="left:2184px;top:1627.9px;line-height:30px;color:#222">通讯函数</div><div class="t" style="left:2374px;top:1627.9px;line-height:30px;color:#222">V1.0</div><svg style="position:absolute;left:2433px;top:1638.9px;color:#c8c8c8;" width="14" height="9"><use href="#chev-d"/></svg></div>
<div style="left:2472px;top:1542px;width:8px;height:110px;background:#c9c9c9;border-radius:4px"></div>
<div style="left:2116px;top:1658.5px;width:365px;height:4px;background:#a9c8f7"></div>
<div style="left:2117px;top:1663px;width:363px;height:35.5px;background:#dde9fc;border-radius:8px 8px 0 0"></div><div class="t" style="left:2120px;top:1665.75px;line-height:30px;color:#1f72f0;font-weight:bold;font-size:19.7px">系统库工艺指令</div><svg style="position:absolute;left:2455px;top:1675.75px;color:#1f72f0;" width="18" height="11"><use href="#chev-d"/></svg>
<div style="left:2118.5px;top:1702px;width:359.5px;height:36px;background:#edf0f5;border-radius:8px"></div><svg style="position:absolute;left:2131px;top:1711.5px;color:#333;" width="10.5" height="17"><use href="#chev-r"/></svg><svg style="position:absolute;left:2154px;top:1711.0px;color:#333;" width="19" height="18"><use href="#fold"/></svg><div class="t" style="left:2184px;top:1705.0px;line-height:30px;color:#222">单轴函数</div><div class="t" style="left:2383px;top:1705.0px;line-height:30px;color:#222">V1.0</div><svg style="position:absolute;left:2442px;top:1716.0px;color:#c8c8c8;" width="14" height="9"><use href="#chev-d"/></svg>
<div style="left:2116px;top:1781.5px;width:365px;height:4px;background:#a9c8f7"></div>
<div style="left:2117px;top:1786.5px;width:363px;height:35.0px;background:#dde9fc;border-radius:8px 8px 0 0"></div><div class="t" style="left:2120px;top:1789.0px;line-height:30px;color:#1f72f0;font-weight:bold;font-size:19.7px">用户库</div><svg style="position:absolute;left:2455px;top:1799.0px;color:#1f72f0;" width="18" height="11"><use href="#chev-d"/></svg>
<div class="t" style="left:2163px;top:1822.0px;line-height:30px;color:#444;font-weight:bold">无符合条件函数</div>
<div style="left:2216px;top:1847px;width:305px;height:60px;background:#fdf4ef;border:3px solid #fbe4d6;border-bottom:none;border-radius:6px 6px 0 0;box-shadow:0 0 14px 3px rgba(200,170,150,.30)"></div>
<div class="t" style="left:2246.5px;top:1862.0px;line-height:30px;color:#222;font-size:19px">PLC_1</div>
<div class="t" style="left:2315.5px;top:1862.0px;line-height:30px;color:#222;font-size:19px">admin(完全访问权限)</div>
<svg width="0" height="0" style="position:absolute"><defs><symbol id="chev-d" viewBox="0 0 14 9"><path d="M1.5 1.5 L7 7 L12.5 1.5" fill="none" stroke="currentColor" stroke-width="1.6"/></symbol><symbol id="chev-r" viewBox="0 0 9 14"><path d="M1.5 1.5 L7 7 L1.5 12.5" fill="none" stroke="currentColor" stroke-width="1.6"/></symbol><symbol id="fold-open" viewBox="0 0 21 18"><path d="M1.8 15.5 V2.8 Q1.8 1.3 3.3 1.3 H7.2 Q8.2 1.3 8.8 2.3 L9.6 3.8 H16 Q17.6 3.8 17.6 5.4 V7" fill="none" stroke="currentColor" stroke-width="1.7" stroke-linejoin="round"/><path d="M2.5 4.6 H16.8 V7 H4.2 Z" fill="currentColor" opacity=".55"/><path d="M1.8 16.2 L4.2 7.2 H19.8 L17.2 16.2 Z" fill="none" stroke="currentColor" stroke-width="1.7" stroke-linejoin="round"/></symbol><symbol id="fold" viewBox="0 0 19 18"><path d="M1.2 15.2 V2.6 Q1.2 1.2 2.6 1.2 H6.8 Q7.6 1.2 8.2 2 L9.2 3.4 H15.8 Q17.6 3.4 17.6 5.2 V15.2 Q17.6 16.8 16 16.8 H2.8 Q1.2 16.8 1.2 15.2 Z M1.2 5.6 H17.6" fill="none" stroke="currentColor" stroke-width="1.5" stroke-linejoin="round"/></symbol><symbol id="device" viewBox="0 0 21 12"><rect x="1" y="1" width="19" height="10" rx="1.8" fill="none" stroke="currentColor" stroke-width="1.6"/><path d="M4.6 3.8 V8.2 M7.4 3.8 V8.2" stroke="currentColor" stroke-width="1.1"/><circle cx="11" cy="6" r="1.7" fill="none" stroke="currentColor" stroke-width="1.1"/><circle cx="15.8" cy="6" r="1.7" fill="none" stroke="currentColor" stroke-width="1.1"/></symbol><symbol id="table" viewBox="0 0 21 21"><path d="M16.8 6 V3 Q16.8 1.2 15 1.2 H3 Q1.2 1.2 1.2 3 V17.8 Q1.2 19.6 3 19.6 H10" fill="none" stroke="currentColor" stroke-width="1.5"/><path d="M4 6 h.6 M6.2 6 h6 M4 9.5 h.6 M6.2 9.5 h3 M4 13 h.6 M6.2 13 h3" stroke="currentColor" stroke-width="1.4" stroke-linecap="round"/><path d="M12 9.5 Q14 8.6 15 11 L17 18.5 Q17.6 20 19 19.6 M19.5 9 Q18 10.5 15.8 14 L12.5 19.8" fill="none" stroke="currentColor" stroke-width="1.5"/></symbol><symbol id="code" viewBox="0 0 21 16"><path d="M6.5 3 L1.8 8 L6.5 13 M12.2 1.8 L8.8 14.2 M14.5 3 L19.2 8 L14.5 13" fill="none" stroke="currentColor" stroke-width="1.5"/></symbol><symbol id="cycle" viewBox="0 0 21 21"><path d="M1.5 10.5 Q1.2 4.2 7.5 4 H16.5" fill="none" stroke="currentColor" stroke-width="1.5"/><path d="M15.2 1 L19.2 4 L15.2 7 Z" fill="currentColor"/><path d="M19.5 11 Q20 17.8 13.5 17.6 H5" fill="none" stroke="currentColor" stroke-width="1.5"/><path d="M6 14.6 L1.8 17.6 L6 20.4 Z" fill="currentColor"/><path d="M8.6 7 V10.5 L13 14" fill="none" stroke="currentColor" stroke-width="1.5"/></symbol><symbol id="maintask" viewBox="0 0 21 21"><path d="M1.5 10.5 Q1.2 4.2 7.5 4 H16.5" fill="none" stroke="currentColor" stroke-width="1.5"/><path d="M15.2 1 L19.2 4 L15.2 7 Z" fill="currentColor"/><path d="M19.5 11 Q20 17.8 13.5 17.6 H5" fill="none" stroke="currentColor" stroke-width="1.5"/><path d="M6 14.6 L1.8 17.6 L6 20.4 Z" fill="currentColor"/></symbol><symbol id="iotable" viewBox="0 0 21 21"><path d="M15.5 5 V3 Q15.5 1.2 13.7 1.2 H4 Q2.2 1.2 2.2 3 V16 Q2.2 17.8 4 17.8 H9" fill="none" stroke="currentColor" stroke-width="1.4"/><path d="M4.8 4 V14.5 Q4.8 15.6 6 15.6" fill="none" stroke="currentColor" stroke-width="1.1"/><path d="M7.4 6 h.5 M9.2 6 h4 M7.4 9 h.5 M9.2 9 h2.5 M7.4 12 h.5 M9.2 12 h2.5" stroke="currentColor" stroke-width="1.3" stroke-linecap="round"/><path d="M13 11 L17 16 M17 12.5 V16.2 H13.3" fill="none" stroke="currentColor" stroke-width="1.6"/><circle cx="12.5" cy="18.5" r="1.3" fill="currentColor"/><circle cx="17.8" cy="18.5" r="1.3" fill="currentColor"/></symbol><symbol id="diag" viewBox="0 0 21 21"><circle cx="9.3" cy="9.3" r="7.8" fill="none" stroke="currentColor" stroke-width="1.6"/><path d="M15 15 L20 20" stroke="currentColor" stroke-width="1.8"/><path d="M1.8 9.5 H5 L7 6 L10 12.5 L12 9 H16.5" fill="none" stroke="currentColor" stroke-width="1.4"/></symbol><symbol id="monitor" viewBox="0 0 21 21"><path d="M19 8 V3 Q19 1.2 17.2 1.2 H3 Q1.2 1.2 1.2 3 V17.5 Q1.2 19.3 3 19.3 H6" fill="none" stroke="currentColor" stroke-width="1.5"/><path d="M4.5 5 h2 M9 5 h2 M4.5 9 h2" stroke="currentColor" stroke-width="1.3"/><path d="M6.5 15 Q12.5 9 19.5 15 Q12.5 21 6.5 15 Z" fill="none" stroke="currentColor" stroke-width="1.5"/><circle cx="13" cy="15" r="2.2" fill="currentColor"/></symbol><symbol id="proj" viewBox="0 0 19 22"><path d="M5.2 1.5 L12.2 3 Q13.2 3.3 13 4.3 L9.6 19.6 Q9.3 20.6 8.3 20.3 L1.8 18.8 Q0.9 18.5 1.1 17.5 L4.3 2.3 Q4.5 1.3 5.2 1.5 Z" fill="none" stroke="currentColor" stroke-width="1.6"/><path d="M5.5 5.6 L8.6 6.3 M5 8.2 L8 8.9" stroke="currentColor" stroke-width="1.3"/><path d="M14.5 3.5 V20 M17.5 3.5 V20" stroke="currentColor" stroke-width="1.6"/></symbol><symbol id="greenplc" viewBox="0 0 28 28"><rect x="10.8" y="0.2" width="16.8" height="20" rx="1.5" fill="#0fd43a"/><path d="M15.7 3 V8.2 M17.8 3 V8.2" stroke="#bff0c8" stroke-width="0.9"/><rect x="19.8" y="3" width="3.6" height="5.2" fill="none" stroke="#bff0c8" stroke-width="0.9"/><path d="M17.5 11.3 h6.5 M17.5 13.8 h6.5 M17.5 16.3 h6.5" stroke="#bff0c8" stroke-width="0.9" stroke-dasharray="1.1 1"/><rect x="0.3" y="9.6" width="17.5" height="13.6" rx="2.6" fill="#0fd43a" stroke="#f5f9fe" stroke-width="0.8"/><path d="M4.8 16.2 L8 19.2 L13 13.4" fill="none" stroke="#e8ffe8" stroke-width="1.3"/><rect x="6.8" y="24" width="5" height="3.6" fill="#0fd43a"/><path d="M8.8 22.8 V24.5" stroke="#0fd43a" stroke-width="1.2"/><path d="M1 25.8 h4 M13.4 25.8 h4" stroke="#0fd43a" stroke-width="1.4"/></symbol><symbol id="checkc" viewBox="0 0 21 21"><circle cx="10.5" cy="10.5" r="8.8" fill="#c7d6ef" stroke="#0b63e6" stroke-width="1.8" stroke-dasharray="48 4" stroke-dashoffset="-14"/><path d="M6 10.5 L9.2 13.2 L14.5 8" fill="none" stroke="#0b63e6" stroke-width="1.6"/></symbol></defs></svg>
<div class="t" style="left:763.5px;top:84.0px;line-height:30px;color:#8a8a8a;font-size:20px">PU_2</div>
<div class="t" style="left:930px;top:84.0px;line-height:30px;color:#8a8a8a;font-size:20px">PU_5</div>
<svg style="position:absolute;left:894px;top:91px;color:#8a8a8a;" width="21" height="16"><use href="#code"/></svg>
<div class="t" style="left:1097px;top:84.0px;line-height:30px;color:#8a8a8a;font-size:20px">PU_6</div>
<svg style="position:absolute;left:1061.5px;top:91px;color:#8a8a8a;" width="21" height="16"><use href="#code"/></svg>
<div class="t" style="left:1264.5px;top:84.0px;line-height:30px;color:#111;font-size:20px">PU_7</div>
<svg style="position:absolute;left:1228.5px;top:91px;color:#111;" width="21" height="16"><use href="#code"/></svg>
<div class="t" style="left:1432px;top:84.0px;line-height:30px;color:#8a8a8a;font-size:20px">PU_14</div>
<svg style="position:absolute;left:1395px;top:91px;color:#8a8a8a;" width="21" height="16"><use href="#code"/></svg>
<div class="t" style="left:1609.5px;top:84.0px;line-height:30px;color:#8a8a8a;font-size:20px">Cycle_3</div>
<svg style="position:absolute;left:1573.5px;top:89px;color:#8a8a8a;" width="21" height="21"><use href="#cycle"/></svg>
<div class="t" style="left:1799.5px;top:84.0px;line-height:30px;color:#8a8a8a;font-size:20px">PU_1</div>
<svg style="position:absolute;left:1763.5px;top:91px;color:#8a8a8a;" width="21" height="16"><use href="#code"/></svg>
<div class="t" style="left:1966px;top:84.0px;line-height:30px;color:#8a8a8a;font-size:20px">Cycle_1</div>
<svg style="position:absolute;left:1930px;top:89px;color:#8a8a8a;" width="21" height="21"><use href="#cycle"/></svg>
<svg style="position:absolute;left:1350px;top:90px;" width="12" height="12" viewBox="0 0 12 12"><path d="M1 1 L11 11 M11 1 L1 11" stroke="#333" stroke-width="1.4"/></svg>
<svg style="position:absolute;left:779px;top:129px;" width="27" height="27" viewBox="0 0 27 27"><path d="M13.5 1 V26 M1 13.5 H26" stroke="#c9c9c9" stroke-width="3.2"/></svg>
<svg style="position:absolute;left:838px;top:129px;" width="22" height="27" viewBox="0 0 22 27"><path d="M11 3 V26 M1.5 11.5 L11 2 L20.5 11.5" fill="none" stroke="#c9c9c9" stroke-width="3"/></svg>
<svg style="position:absolute;left:894px;top:129px;" width="22" height="27" viewBox="0 0 22 27"><path d="M11 1 V24 M1.5 15.5 L11 25 L20.5 15.5" fill="none" stroke="#c9c9c9" stroke-width="3"/></svg>
<svg style="position:absolute;left:949px;top:129px;" width="27" height="27" viewBox="0 0 27 27"><path d="M10 2 H5 Q1.5 2 1.5 5.5 V22 Q1.5 25.5 5 25.5 H22 Q25.5 25.5 25.5 22 V15" fill="none" stroke="#0c5fe3" stroke-width="2.6"/><path d="M24 4 Q14 6 12 15" fill="none" stroke="#0c5fe3" stroke-width="3"/><path d="M7 9 L11 17.5 L18.5 13.5 Z" fill="#0c5fe3"/></svg>
<svg style="position:absolute;left:1005px;top:129px;" width="27" height="27" viewBox="0 0 27 27"><path d="M10 2 H5 Q1.5 2 1.5 5.5 V22 Q1.5 25.5 5 25.5 H22 Q25.5 25.5 25.5 22 V17" fill="none" stroke="#0c5fe3" stroke-width="2.6"/><path d="M10 17 Q12 8 20 6.5" fill="none" stroke="#0c5fe3" stroke-width="3"/><path d="M17.5 1.5 L26 6 L19 12 Z" fill="#0c5fe3"/></svg>
<svg style="position:absolute;left:1062px;top:129px;" width="28" height="27" viewBox="0 0 28 27"><path d="M19 4 Q16 1.5 12.5 1.5 Q1.5 1.5 1.5 13 Q1.5 24 12.5 24.5" fill="none" stroke="#d6d6d6" stroke-width="2"/><path d="M24 9 Q25 11 25 13" fill="none" stroke="#d6d6d6" stroke-width="2"/><path d="M16 14 L27 21 L16 27 Z" fill="#d6d6d6"/><path d="M11 9 L13 8 V18" fill="none" stroke="#d6d6d6" stroke-width="1.5"/></svg>
<div style="left:1112px;top:132px;width:1.5px;height:20px;background:#c8c8c8"></div>
<svg style="position:absolute;left:1136px;top:129px;" width="27" height="26" viewBox="0 0 27 26"><rect x="0" y="0" width="27" height="6" fill="#0c5fe3"/><path d="M1 10 V22 M1 15.5 H9 L11 13" fill="none" stroke="#0c5fe3" stroke-width="1.6"/><path d="M0 25 H12" stroke="#0c5fe3" stroke-width="1.6"/><path d="M15 19.5 H27 M21 13.5 V25.5" stroke="#0c5fe3" stroke-width="3.6"/></svg>
<svg style="position:absolute;left:1193px;top:129px;" width="27" height="26" viewBox="0 0 27 26"><rect x="0" y="0" width="27" height="6" fill="#0c5fe3"/><path d="M1 10 V22 M1 15.5 H9 L11 13" fill="none" stroke="#0c5fe3" stroke-width="1.6"/><path d="M0 25 H12" stroke="#0c5fe3" stroke-width="1.6"/><path d="M13.5 19.5 H27" stroke="#0c5fe3" stroke-width="3"/></svg>
<svg style="position:absolute;left:1249px;top:129px;" width="27" height="26" viewBox="0 0 27 26"><rect x="0" y="0" width="27" height="6" fill="#0c5fe3"/><rect x="0" y="10" width="27" height="6" fill="#0c5fe3"/><rect x="0" y="20" width="27" height="6" fill="#0c5fe3"/></svg>
<svg style="position:absolute;left:1306.5px;top:130.5px;" width="26" height="23" viewBox="0 0 26 23"><path d="M4 1.2 H22 Q25 1.2 25 4.2 V12 Q25 15 22 15 H17 L14.5 17.5 L12 15 H4 Q1 15 1 12 V4.2 Q1 1.2 4 1.2 Z" fill="none" stroke="#0c5fe3" stroke-width="2.2"/><circle cx="7.5" cy="8" r="1.4" fill="#0c5fe3"/><circle cx="13" cy="8" r="1.4" fill="#0c5fe3"/><circle cx="18.5" cy="8" r="1.4" fill="#0c5fe3"/><path d="M1 21.5 H24" stroke="#0c5fe3" stroke-width="2.4"/></svg>
<svg style="position:absolute;left:1364px;top:131px;" width="25" height="23" viewBox="0 0 25 23"><path d="M4 1.2 H21 Q24 1.2 24 4.2 V15 Q24 18 21 18 H16 L13.5 21.5 L11 18 H4 Q1 18 1 15 V4.2 Q1 1.2 4 1.2 Z" fill="none" stroke="#0c5fe3" stroke-width="2.2"/><path d="M10 4 L6.5 15" stroke="#0c5fe3" stroke-width="2"/><text x="11.5" y="11" font-size="11" font-weight="bold" fill="#0c5fe3" font-family="Liberation Sans">*</text></svg>
<svg style="position:absolute;left:1420px;top:131px;" width="26" height="23" viewBox="0 0 26 23"><path d="M14 18 H10.5 L8 21.5 L5.5 18 H4 Q1 18 1 15 V4.2 Q1 1.2 4 1.2 H19 Q22 1.2 22 4.2 V11" fill="none" stroke="#cdcdcd" stroke-width="2"/><path d="M10 4 L6.5 15" stroke="#cdcdcd" stroke-width="1.8"/><path d="M15 12 L25 22 M25 12 L15 22" stroke="#cdcdcd" stroke-width="2"/></svg>
<div style="left:1469px;top:122.5px;width:38px;height:38px;background:#c5d6f1;border-radius:5px;box-shadow:inset 1px 1px 0 #a9c3ee"></div>
<svg style="position:absolute;left:1475.5px;top:128.5px;" width="26" height="26" viewBox="0 0 26 26"><path d="M13 2 L16.2 9.3 L24 10 L18 15.2 L19.8 23 L13 19 L6.2 23 L8 15.2 L2 10 L9.8 9.3 Z" fill="none" stroke="#2a78f5" stroke-width="2" stroke-linejoin="round"/></svg>
<div style="left:1526px;top:132px;width:1.5px;height:20px;background:#c8c8c8"></div>
<svg style="position:absolute;left:1550px;top:129px;" width="28" height="27" viewBox="0 0 28 27"><path d="M14 1 V15 M8.5 9.5 L14 15 L19.5 9.5" fill="none" stroke="#cdcdcd" stroke-width="2"/><path d="M9 13 H1.5 V26 H26.5 V13 H19" fill="none" stroke="#cdcdcd" stroke-width="2"/><path d="M6 18 V22 M9 18 V22" stroke="#cdcdcd" stroke-width="1.4"/><circle cx="14" cy="20" r="1.8" fill="none" stroke="#cdcdcd" stroke-width="1.3"/><circle cx="20" cy="20" r="1.8" fill="none" stroke="#cdcdcd" stroke-width="1.3"/></svg>
<div style="left:1600px;top:122.5px;width:38px;height:38px;background:#c5d6f1;border-radius:5px;box-shadow:inset 1px 1px 0 #a9c3ee"></div>
<svg style="position:absolute;left:1606.5px;top:133px;" width="26" height="18" viewBox="0 0 26 18"><circle cx="6.5" cy="11" r="6.5" fill="#f39422"/><circle cx="19.5" cy="11" r="6.5" fill="#f39422"/><rect x="3" y="2" width="7" height="7" rx="3" fill="#f39422"/><rect x="16" y="2" width="7" height="7" rx="3" fill="#f39422"/><rect x="9" y="6" width="8" height="4" fill="#f39422"/><path d="M5 8.5 Q6.5 9 7.5 11 M18 8.5 Q19.5 9 20.5 11" fill="none" stroke="#fff" stroke-width="1.1"/></svg>
<div style="left:1656px;top:132px;width:1.5px;height:20px;background:#c8c8c8"></div>
<svg style="position:absolute;left:1682px;top:130.5px;" width="24" height="24" viewBox="0 0 24 24"><rect x="2" y="1" width="19.5" height="21.5" rx="3" fill="none" stroke="#0c5fe3" stroke-width="2.4"/><path d="M0 11.5 H24" stroke="#2840a8" stroke-width="2"/></svg>
<svg style="position:absolute;left:1738px;top:130.5px;" width="25" height="24" viewBox="0 0 25 24"><path d="M3 21.5 V4 Q3 1.2 5.8 1.2 H18.5 Q21.5 1.2 21.5 4 V21.5" fill="none" stroke="#0c5fe3" stroke-width="2.4"/><path d="M0 21.8 H25" stroke="#2840a8" stroke-width="2"/></svg>
<svg style="position:absolute;left:1795px;top:130.5px;" width="25" height="24" viewBox="0 0 25 24"><path d="M3 2 V19.5 Q3 22.5 6 22.5 H18.5 Q21.5 22.5 21.5 19.5 V2" fill="none" stroke="#0c5fe3" stroke-width="2.4"/><path d="M0 1.5 H25" stroke="#2840a8" stroke-width="2"/></svg>
<svg style="position:absolute;left:2063.5px;top:129px;" width="26" height="24" viewBox="0 0 26 24"><circle cx="10.5" cy="10.5" r="9.2" fill="none" stroke="#0c5fe3" stroke-width="2.2"/><path d="M17.5 17 L23.5 22.5" stroke="#0c5fe3" stroke-width="2.6" stroke-linecap="round"/><path d="M6.5 8 Q7 6 9 5.5" fill="none" stroke="#0c5fe3" stroke-width="1.2"/></svg>
<svg style="position:absolute;left:766px;top:189px;" width="15" height="19" viewBox="0 0 15 19"><path d="M2 1 V18 M13 1.5 L3 10 L13 18" fill="none" stroke="#888" stroke-width="2.4"/></svg>
<svg style="position:absolute;left:807px;top:189px;" width="11" height="18" viewBox="0 0 11 18"><path d="M9.5 1.5 L2 9 L9.5 16.5" fill="none" stroke="#888" stroke-width="2.2"/></svg>
<svg style="position:absolute;left:839px;top:187px;" width="28" height="25" viewBox="0 0 28 25"><rect x="4" y="1" width="20" height="23" fill="none" stroke="#222" stroke-width="1.8"/><path d="M0 7 H4 M0 16 H4 M24 7 H28" stroke="#222" stroke-width="1.8"/><path d="M11 6 H17 M14 6 V19 M11 19 H17" stroke="#222" stroke-width="1.5"/></svg>
<svg style="position:absolute;left:886.5px;top:186px;" width="18" height="22" viewBox="0 0 18 22"><path d="M2 0 V13 Q2 15 4 15 H16 M10.5 9 L16.5 15 L10.5 21" fill="none" stroke="#222" stroke-width="2"/></svg>
<svg style="position:absolute;left:925.5px;top:191px;" width="24" height="18" viewBox="0 0 24 18"><path d="M0 16.5 H16 V3 M9.5 9 L16 2 L22.5 9" fill="none" stroke="#222" stroke-width="2.2"/></svg>
<svg style="position:absolute;left:968.5px;top:194px;" width="25" height="15" viewBox="0 0 25 15"><path d="M1 2 H2.5 V8 H5 V3 M5 8 H8.5 V13.5 M8.5 8 V13 H11 V8 H14.5 V13 H17.5 V3 M17.5 8 H21 V2 H24" fill="none" stroke="#222" stroke-width="1.8"/></svg>
<svg style="position:absolute;left:1012.5px;top:189px;" width="26" height="22" viewBox="0 0 26 22"><path d="M0 11 H9 M17 11 H26 M9 0 V22 M17 0 V22" fill="none" stroke="#222" stroke-width="2"/></svg>
<svg style="position:absolute;left:1055.5px;top:189px;" width="28" height="22" viewBox="0 0 28 22"><path d="M0 11 H9 M19 11 H28 M9 0 V22 M19 0 V22 M16 2 L12 21" fill="none" stroke="#222" stroke-width="2"/></svg>
<svg style="position:absolute;left:1098.5px;top:188px;" width="28" height="26" viewBox="0 0 28 26"><text x="2.5" y="9.5" font-size="9.5" font-weight="bold" fill="#222" font-family="Liberation Sans">NOT</text><path d="M0 17 H6 M21 17 H27 M6 12 V25 M21 12 V25" fill="none" stroke="#222" stroke-width="2.2"/></svg>
<svg style="position:absolute;left:1142px;top:189px;" width="26" height="22" viewBox="0 0 26 22"><path d="M0 10.5 H6 M20 10.5 H26 M9 1 Q4 10.5 9 21 M17 1 Q22 10.5 17 21" fill="none" stroke="#222" stroke-width="2"/></svg>
<svg style="position:absolute;left:1185px;top:188px;" width="27" height="23" viewBox="0 0 27 23"><path d="M0 11 H6 M21 11 H27 M9.5 1 Q4.5 11 9.5 22 M17.5 1 Q22.5 11 17.5 22 M15.5 3 L11.5 19" fill="none" stroke="#222" stroke-width="2"/></svg>
<svg style="position:absolute;left:2013px;top:189px;" width="11" height="17" viewBox="0 0 11 17"><path d="M1.5 1.5 L9 8.5 L1.5 15.5" fill="none" stroke="#888" stroke-width="2.2"/></svg>
<svg style="position:absolute;left:2050px;top:189px;" width="13" height="18" viewBox="0 0 13 18"><path d="M1.5 1.5 L8.5 9 L1.5 16.5 M11.5 1 V17" fill="none" stroke="#888" stroke-width="2.2"/></svg>
<svg style="position:absolute;left:2085.5px;top:187px;" width="20" height="22" viewBox="0 0 20 22"><path d="M2 5.5 H19 M7 1 L2 5.5 L7 10 M1 16.5 H18 M13 12 L18 16.5 L13 21" fill="none" stroke="#1a1a1a" stroke-width="2"/></svg>
<svg style="position:absolute;left:28px;top:7px;" width="61" height="23" viewBox="0 0 61 23"><g fill="#0b5fe0"><path d="M2 2 H16 L15 6 H1 Z"/><path d="M0 10 H20 L19 14 H11 L8 22 H3 L6 14 H-1 Z"/><path d="M11 14 L15 14 L17 22 L12.5 22 Z"/><path d="M22 2 H36 L35 6 H21 Z"/><path d="M21 10 H36 L33 22 H28 L30 14 H20 Z"/><path d="M39 2 H56 L55 6 H38 Z"/><path d="M38 10 H53 L50 22 H45 L47 14 H37 Z"/><path d="M54 8 L60 10 L58 14 L52 12 Z"/></g></svg>
<svg style="position:absolute;left:38px;top:46px;" width="22" height="28" viewBox="0 0 22 28"><path d="M0 1.5 Q0 0 1.5 0 H13 L21 8 V26 Q21 27.5 19.5 27.5 H1.5 Q0 27.5 0 26 Z" fill="#0a5bdc"/><path d="M13 0 L21 8 H14.5 Q13 8 13 6.5 Z" fill="#f39422"/><path d="M0 25.5 V26 Q0 27.5 1.5 27.5 H19.5 Q21 27.5 21 26 V25.5" fill="#2b3f9e"/></svg>
<svg style="position:absolute;left:93px;top:47px;" width="28" height="26" viewBox="0 0 28 26"><path d="M1 1 Q1 0 2 0 H9 L11 2 H25 Q26 2 26 3 V8 H1 Z" fill="#f39422"/><path d="M4 4 H25 V9 H4 Z" fill="#fff"/><path d="M3 8 Q3.5 7 4.5 7 H26 Q27.5 7 27.2 8.5 L25 23 Q24.6 25 22.6 25 H2.5 Q0.5 25 0.8 23 Z" fill="#0a5bdc"/><path d="M0.8 23 Q0.5 25 2.5 25 H22.6 Q24.6 25 25 23" fill="none" stroke="#2b3f9e" stroke-width="1.5"/></svg>
<svg style="position:absolute;left:151px;top:46px;" width="28" height="28" viewBox="0 0 28 28"><rect x="1" y="1" width="25.5" height="25.5" rx="3" fill="none" stroke="#bdbdbd" stroke-width="2"/><path d="M7 1 V9.5 H20.5 V1" fill="none" stroke="#bdbdbd" stroke-width="2"/><path d="M15.5 3.5 V6.5" stroke="#bdbdbd" stroke-width="1.5"/></svg>
<svg style="position:absolute;left:202px;top:45px;" width="26" height="28" viewBox="0 0 26 28"><path d="M7 9 H13 Q24 9 24 20 Q24 24 21 27 Q21 15 13 15 H7 Z" fill="#0a5bdc"/><path d="M9 0 L0 11 L9 21 Z" fill="#2b3f9e"/><path d="M0 11 L5 5 V17 Z" fill="#f39422"/><path d="M8.5 9 H13.5 V15 H8.5 Z" fill="#2b3f9e"/></svg>
<svg style="position:absolute;left:241px;top:56.5px;" width="8" height="6" viewBox="0 0 8 6"><path d="M0 0 H8 L4 5.5 Z" fill="#0a5bdc"/></svg>
<svg style="position:absolute;left:274px;top:47px;" width="24" height="25" viewBox="0 0 24 25"><path d="M2 24 Q-1 13 8 10.5 Q11 9.8 15 10 V15 L22 7.5 L15 1 V5.5 Q4 5.5 2 14" fill="none" stroke="#bdbdbd" stroke-width="1.6" stroke-linejoin="round"/></svg>
<svg style="position:absolute;left:315px;top:57px;" width="8" height="6" viewBox="0 0 8 6"><path d="M0 0 H8 L4 5.5 Z" fill="#ccd6e6"/></svg>
<div style="left:329.5px;top:52px;width:1.5px;height:26px;background:#bfcbe0"></div>
<svg style="position:absolute;left:353px;top:46.5px;" width="27" height="26" viewBox="0 0 27 26"><g transform="rotate(-8 4 4)"><rect x="0.5" y="2" width="6" height="6" fill="#0a5bdc"/></g><g transform="rotate(-8 13 3)"><rect x="9.5" y="0.5" width="6" height="6" fill="#f39422"/></g><g transform="rotate(12 22 3)"><rect x="19" y="0.5" width="6" height="6" fill="#f39422"/></g><rect x="0.5" y="11.5" width="6" height="6" fill="#2b3f9e"/><g transform="rotate(-8 13 14)"><rect x="9.5" y="11" width="6" height="6" fill="#0a5bdc"/></g><rect x="19" y="10" width="6" height="6" fill="#f39422"/><rect x="0.5" y="20" width="6" height="6" fill="#2b3f9e"/><rect x="10" y="20" width="6" height="6" fill="#2b3f9e"/><rect x="19.5" y="20" width="6" height="6" fill="#0a5bdc"/></svg>
<svg style="position:absolute;left:411px;top:46.5px;" width="27" height="28" viewBox="0 0 27 28"><g fill="none" stroke="#c3c8d3" stroke-width="1.3"><rect x="0.8" y="3" width="5" height="5"/><rect x="10" y="1" width="5" height="5"/><rect x="20" y="1.5" width="5" height="5" transform="rotate(10 22 4)"/><rect x="0.8" y="12" width="5" height="5"/><rect x="10" y="12" width="5" height="5"/><rect x="20" y="10" width="5" height="5"/><rect x="0.8" y="21" width="5" height="5"/><rect x="10" y="21" width="5" height="5"/></g><circle cx="20" cy="20.5" r="6.5" fill="#c3c8d3"/><path d="M17 17.5 L23 23.5 M23 17.5 L17 23.5" stroke="#eef2f8" stroke-width="1.6"/></svg>
<svg style="position:absolute;left:469px;top:46px;" width="28" height="28" viewBox="0 0 28 28"><rect x="0.5" y="12" width="26.5" height="15" fill="#0a5bdc"/><rect x="0.5" y="25" width="26.5" height="2" fill="#2b3f9e"/><path d="M5 16 V23 M9 16 V23" stroke="#fff" stroke-width="1.6"/><circle cx="14.5" cy="19.5" r="2.3" fill="none" stroke="#fff" stroke-width="1.5"/><circle cx="21.5" cy="19.5" r="2.3" fill="none" stroke="#fff" stroke-width="1.5"/><path d="M10 0 H17 V9 H22 L13.5 19 L5 9 H10 Z" fill="#f39422" stroke="#8b8b8b" stroke-width="1"/></svg>
<svg style="position:absolute;left:527px;top:46px;" width="28" height="28" viewBox="0 0 28 28"><rect x="0.5" y="12" width="26.5" height="15" fill="#0a5bdc"/><rect x="0.5" y="25" width="26.5" height="2" fill="#2b3f9e"/><path d="M5 16 V23 M9 16 V23" stroke="#fff" stroke-width="1.6"/><circle cx="14.5" cy="19.5" r="2.3" fill="none" stroke="#fff" stroke-width="1.5"/><circle cx="21.5" cy="19.5" r="2.3" fill="none" stroke="#fff" stroke-width="1.5"/><path d="M10 19 H17 V10 H22 L13.5 0 L5 10 H10 Z" fill="#f39422" stroke="#8b8b8b" stroke-width="1"/></svg>
<div style="left:581.5px;top:52px;width:1.5px;height:26px;background:#bfcbe0"></div>
<svg style="position:absolute;left:604px;top:46px;" width="28" height="27" viewBox="0 0 28 27"><g fill="none" stroke="#c0c4cc" stroke-width="1.4"><path d="M11 5 V2 Q11 1 12 1 H26 Q27 1 27 2 V20 Q27 21 26 21 H23"/><path d="M17 2 V10 M20 3 V9"/><rect x="22" y="3" width="3.5" height="6"/><path d="M6 8 V4 Q6 3 7 3 H10"/><rect x="0.8" y="10" width="16" height="12" rx="2.5"/><path d="M8.8 22 V25 M3 25.5 H6 M11 25.5 H15 M23 23 V24"/></g></svg>
<svg style="position:absolute;left:662px;top:46px;" width="28" height="28" viewBox="0 0 28 28"><rect x="10" y="0.5" width="17.5" height="20" fill="#0a5bdc"/><path d="M16 3 V10 M18.5 3 V10" stroke="#fff" stroke-width="1.2"/><rect x="20.5" y="3" width="4" height="6.5" fill="none" stroke="#fff" stroke-width="1.2"/><path d="M16.5 13 h8 M16.5 15.5 h8 M16.5 18 h8" stroke="#fff" stroke-width="1" stroke-dasharray="1.2 1"/><rect x="0.5" y="10" width="17" height="12" rx="2.5" fill="#9a9a9a" stroke="#666" stroke-width="1"/><path d="M9 22 V25 M2 25.5 H6 M12 25.5 H16" stroke="#aaa" stroke-width="1.5"/><rect x="7" y="23.5" width="4" height="3.5" fill="#aaa"/></svg>
<div style="left:715.5px;top:52px;width:1.5px;height:26px;background:#bfcbe0"></div>
<svg style="position:absolute;left:739px;top:46px;" width="28" height="28" viewBox="0 0 28 28"><g fill="none" stroke="#c0c4cc" stroke-width="1.6"><rect x="0.8" y="0.8" width="22" height="26" rx="1.5"/><path d="M8 1 V27"/><path d="M12 4 V12 M14.5 4 V12"/><rect x="16.5" y="4" width="4" height="7.5"/></g><circle cx="4.5" cy="21" r="1.5" fill="#c0c4cc"/><path d="M11 16 h6 M11 19 h6 M11 22 h6" stroke="#c0c4cc" stroke-width="1.2" stroke-dasharray="1.2 1"/><path d="M17 14 L27 20 L17 26 Z" fill="#c0c4cc"/></svg>
<svg style="position:absolute;left:796.5px;top:46px;" width="28" height="28" viewBox="0 0 28 28"><rect x="0.5" y="0.5" width="23" height="26.5" fill="#0a5bdc"/><rect x="0.5" y="25" width="23" height="2" fill="#2b3f9e"/><path d="M8 1 V25" stroke="#2b3f9e" stroke-width="1.2"/><path d="M12 4 V12 M14.5 4 V12" stroke="#fff" stroke-width="1.3"/><rect x="16.5" y="4" width="4" height="7.5" fill="none" stroke="#fff" stroke-width="1.3"/><circle cx="4.5" cy="21" r="1.5" fill="#f39422"/><path d="M11 16 h4 M11 19 h4 M11 22 h4" stroke="#fff" stroke-width="1.2" stroke-dasharray="1.2 1"/><rect x="14" y="13.5" width="13.5" height="14" rx="3" fill="#f39422"/></svg>
<div style="left:850.5px;top:52px;width:1.5px;height:26px;background:#bfcbe0"></div>
<svg style="position:absolute;left:873px;top:49px;" width="28" height="24" viewBox="0 0 28 24"><path d="M0 5 H6 Q9 5 12 10 L15 15 Q18 20 21 20 H26 M0 19 H6 Q9 19 11 16 M16 9 Q18 5 21 5 H26" fill="none" stroke="#c0c4cc" stroke-width="2"/><path d="M23 1 L27.5 5 L23 9 M23 16 L27.5 20 L23 24" fill="none" stroke="#c0c4cc" stroke-width="2"/></svg>
<svg style="position:absolute;left:7px;top:92.5px;" width="35" height="35" viewBox="0 0 35 35"><g transform="rotate(14 10 17)"><rect x="4" y="1.5" width="15" height="31" rx="2.5" fill="#0a5bdc"/><rect x="17" y="3" width="2.5" height="30" fill="#2b3f9e"/></g><path d="M9 12 L13.5 13.2 M8.2 16 L12.7 17.2" stroke="#fff" stroke-width="2" stroke-linecap="round"/><path d="M26 3 V30" stroke="#0a5bdc" stroke-width="2"/><path d="M30 3 V30" stroke="#2b3f9e" stroke-width="1.6"/><path d="M34 3 V30" stroke="#7c9fe0" stroke-width="1.6"/></svg>
<svg style="position:absolute;left:10px;top:157px;" width="27" height="28" viewBox="0 0 27 28"><rect x="1" y="1" width="25" height="17" rx="2.5" fill="none" stroke="#0a5bdc" stroke-width="2"/><circle cx="8.5" cy="9" r="1.2" fill="#0a5bdc"/><circle cx="13.5" cy="9" r="1.2" fill="#0a5bdc"/><circle cx="18.5" cy="9" r="1.2" fill="#0a5bdc"/><path d="M13.5 18 V27 M0 22.5 H27" stroke="#0a5bdc" stroke-width="2"/><rect x="10.5" y="20.5" width="6" height="4" rx="1" fill="#dde9fc" stroke="#2b3f9e" stroke-width="1.2"/></svg>
<svg style="position:absolute;left:649px;top:90px;" width="21" height="21" viewBox="0 0 21 21"><circle cx="8.5" cy="8.5" r="6.8" fill="none" stroke="#0a5bdc" stroke-width="2.4"/><path d="M13.5 13.5 L19 19" stroke="#0a5bdc" stroke-width="3" stroke-linecap="round"/><path d="M5 7 Q5.5 5 7.5 4.5" fill="none" stroke="#0a5bdc" stroke-width="1.2"/></svg>
<div style="left:686.5px;top:92px;width:1.5px;height:17px;background:#c2cfe3"></div>
<svg style="position:absolute;left:707.5px;top:91px;" width="21" height="17" viewBox="0 0 21 17"><path d="M0 2.5 H9 M0 9 H9 M0 15 H21" stroke="#1f6ff0" stroke-width="2.8"/><path d="M10.5 7 L15.5 1 L20.5 7 Z" fill="#1f6ff0"/></svg>
<svg style="position:absolute;left:2492px;top:96px;" width="36" height="29" viewBox="0 0 36 29"><g fill="none" stroke="#f39422" stroke-width="1.5"><path d="M12 5 V2 Q12 1 13 1 H33 Q34 1 34 2 V20 Q34 21 33 21 H29"/><path d="M19 3 V10 M22 3 V10"/><rect x="24.5" y="3" width="4.5" height="7"/><path d="M22 13 h8 M22 16 h8 M22 19 h8" stroke-dasharray="1.2 1"/><path d="M6 9 V5 Q6 4 7 4 H11"/><rect x="0.8" y="10" width="19" height="13" rx="2.5"/><path d="M5.5 16 L9 19 L14 13.5"/><path d="M10 23 V26 M2 27 H7 M13 27 H18"/></g><rect x="8" y="24.5" width="4" height="3.5" fill="#f39422"/></svg>
<svg style="position:absolute;left:2493px;top:152.5px;" width="36" height="36" viewBox="0 0 36 36"><rect x="0.5" y="0.5" width="15" height="14" rx="5" fill="#2b3f9e"/><rect x="0.5" y="10" width="15" height="5" fill="#fff" opacity=".9"/><rect x="0.5" y="0.5" width="15" height="10" rx="5" fill="#2b3f9e"/><rect x="19.5" y="0.5" width="16" height="17" rx="5" fill="#0a5bdc"/><rect x="19.5" y="13" width="16" height="4" rx="2" fill="#2b3f9e"/><rect x="0.5" y="19.5" width="15" height="16" rx="5" fill="#0a5bdc"/><rect x="0.5" y="31" width="15" height="4.5" rx="2" fill="#2b3f9e"/><rect x="19.5" y="22" width="16" height="13.5" rx="5" fill="#0a5bdc"/><rect x="19.5" y="31" width="16" height="4.5" rx="2" fill="#2b3f9e"/></svg>
<div class="t" style="left:20px;top:1907.0px;line-height:30px;color:#ffffff;font-size:19.5px">语言服务空闲</div>
<svg style="position:absolute;left:161px;top:1913.5px;" width="21" height="21" viewBox="0 0 21 21"><circle cx="10.5" cy="10.5" r="9.3" fill="none" stroke="#ffffff" stroke-width="1.6"/><path d="M6.5 6.5 L14.5 14.5 M14.5 6.5 L6.5 14.5" stroke="#ffffff" stroke-width="1.6"/></svg>
<div class="t" style="left:187px;top:1907.5px;line-height:30px;color:#ffffff;font-size:19.5px">0</div>
<svg style="position:absolute;left:205px;top:1912px;" width="21" height="19" viewBox="0 0 21 19"><path d="M10.5 1.5 L20 18 H1 Z" fill="none" stroke="#ffffff" stroke-width="1.6" stroke-linejoin="round"/><path d="M10.5 7 V13 M10.5 14.8 V16.2" stroke="#ffffff" stroke-width="1.8"/></svg>
<div class="t" style="left:231px;top:1907.5px;line-height:30px;color:#ffffff;font-size:19.5px">0</div>
<div class="t" style="left:263px;top:1907.5px;line-height:30px;color:#ffffff;font-size:19.5px">ClientID-6e933035-2ce1-407a-910e-782efa8e164c</div>
<svg style="position:absolute;left:2258px;top:1913px;" width="19" height="22" viewBox="0 0 19 22"><path d="M3 16 V9 Q3 3 9 3 Q13 3 14.5 6" fill="none" stroke="#ffffff" stroke-width="1.7"/><path d="M15 11 V16 L17 18 H1 L3 16" fill="none" stroke="#ffffff" stroke-width="1.7"/><path d="M7 19.5 Q9 22 11 19.5" fill="#ffffff" stroke="#ffffff" stroke-width="1.5"/><circle cx="14.5" cy="4.5" r="3.5" fill="#ffffff"/></svg>
<div class="t" style="left:2284px;top:1910.0px;line-height:30px;color:#ffffff;font-size:19.5px">8</div>
<svg style="position:absolute;left:2315px;top:1915px;" width="21" height="19" viewBox="0 0 21 19"><rect x="1" y="1" width="19" height="17" rx="1" fill="none" stroke="#ffffff" stroke-width="1.8"/><path d="M1 5.5 H20" stroke="#ffffff" stroke-width="1.8"/></svg>
<svg style="position:absolute;left:2367px;top:1909px;" width="29" height="28" viewBox="0 0 29 28"><g fill="none" stroke="#ffffff" stroke-width="1.5"><rect x="11" y="1" width="16" height="19" rx="1"/><path d="M17 3.5 V9.5 M19.5 3.5 V9.5"/><rect x="21.5" y="3.5" width="3.5" height="6"/><path d="M19 12.5 h6 M19 15 h6 M19 17.5 h6" stroke-dasharray="1.2 1"/><rect x="0.8" y="11" width="16" height="11" rx="1.5" fill="#007acc"/><path d="M4.5 16.5 L7.5 19 L12 14"/><path d="M9 22 V25 M2 26 H6 M12 26 H16"/></g></svg>
<div class="t" style="left:2410px;top:1907.5px;line-height:30px;color:#ffffff;font-size:19.5px">在线设备</div>
<div class="t" style="left:2503px;top:1908.0px;line-height:30px;color:#ffffff;font-size:21px;font-weight:bold">1</div></body></html>
